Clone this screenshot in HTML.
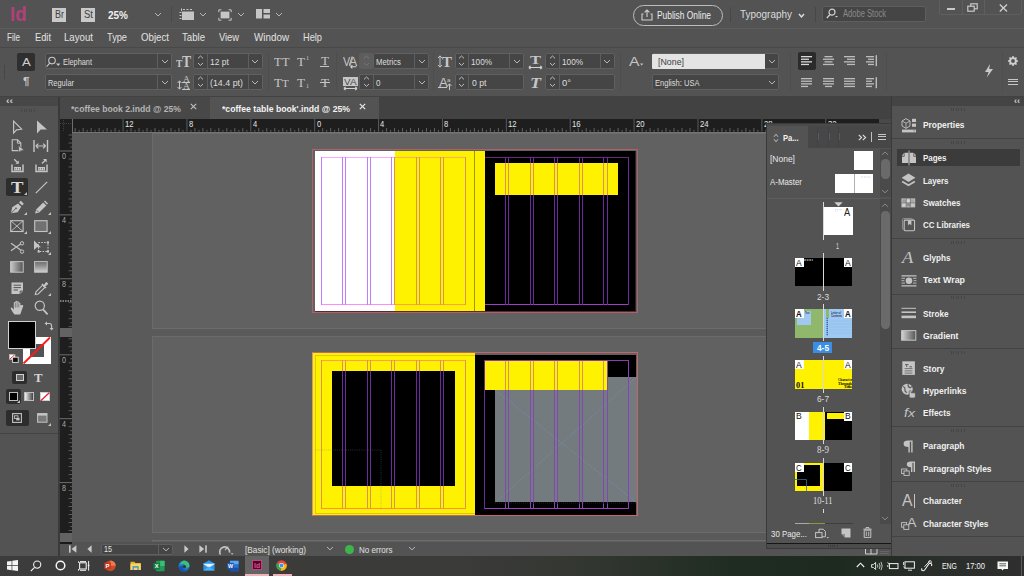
<!DOCTYPE html>
<html><head><meta charset="utf-8"><title>InDesign</title>
<style>
html,body{margin:0;padding:0;}
body{width:1024px;height:576px;overflow:hidden;background:#535353;position:relative;font-family:"Liberation Sans",sans-serif;}
#root{position:absolute;left:0;top:0;width:1024px;height:576px;overflow:hidden;background:#535353;}
#root div{position:absolute;box-sizing:border-box;}
.t{position:absolute;white-space:nowrap;transform-origin:0 50%;display:block;}
.a{position:absolute;overflow:visible;}
</style></head><body><div id="root">
<div style="left:0px;top:0px;width:1024px;height:28px;background:#535353;"></div>
<div style="left:0px;top:28px;width:1024px;height:1px;background:#5c5c5c;"></div>
<span class="t" style="left:10px;top:2px;font:normal 700 21px/23px 'Liberation Sans',sans-serif;color:#b4407a;transform:scaleX(0.8842);">Id</span>
<div style="left:52px;top:8px;width:14px;height:13.5px;background:#c9c9c9;"></div>
<span class="t" style="left:54.6px;top:8px;font:normal 400 10.5px/12px 'Liberation Sans',sans-serif;color:#404040;transform:scaleX(0.8571);">Br</span>
<div style="left:81px;top:8px;width:14px;height:13.5px;background:#c9c9c9;"></div>
<span class="t" style="left:83.6px;top:8px;font:normal 400 10.5px/12px 'Liberation Sans',sans-serif;color:#404040;transform:scaleX(0.9072);">St</span>
<span class="t" style="left:108px;top:9px;font:normal 700 11px/12px 'Liberation Sans',sans-serif;color:#f0f0f0;transform:scaleX(0.9084);">25%</span>
<svg class="a" style="left:154.0px;top:12.3px;" width="8" height="5" viewBox="0 0 8 5"><path d="M1 1 L4.0 4 L7 1" fill="none" stroke="#bdbdbd" stroke-width="0.95"/></svg>
<div style="left:171px;top:6px;width:1px;height:16px;background:#4a4a4a;"></div>
<svg class="a" style="left:179px;top:8px;" width="16" height="13" viewBox="0 0 16 13"><rect x="3" y="3.5" width="12" height="8.5" fill="#c6c6c6"/><path d="M0.5 4.5h2M0.5 7.5h2M0.5 10.5h2M4 1.5h2M7.5 1.5h2M11 1.5h2" stroke="#c6c6c6" stroke-width="1.2"/><path d="M2.5 0.5v2.5" stroke="#c6c6c6" stroke-width="1"/></svg>
<svg class="a" style="left:199.0px;top:11.8px;" width="8" height="5" viewBox="0 0 8 5"><path d="M1 1 L4.0 4 L7 1" fill="none" stroke="#bdbdbd" stroke-width="0.95"/></svg>
<svg class="a" style="left:217.5px;top:8.5px;" width="14" height="12" viewBox="0 0 14 12"><rect x="2.6" y="2.6" width="8.8" height="6.8" fill="#c6c6c6"/><path d="M0.8 3.2V0.8h2.6M10.6 0.8h2.6V3.2M13.2 8.8v2.4h-2.6M3.4 11.2H0.8V8.8" fill="none" stroke="#c6c6c6" stroke-width="1"/></svg>
<svg class="a" style="left:237.0px;top:11.8px;" width="8" height="5" viewBox="0 0 8 5"><path d="M1 1 L4.0 4 L7 1" fill="none" stroke="#bdbdbd" stroke-width="0.95"/></svg>
<svg class="a" style="left:256px;top:9px;" width="14" height="10" viewBox="0 0 14 10"><rect x="0" y="0" width="6" height="9.5" fill="#c6c6c6"/><rect x="7.5" y="0" width="6.5" height="4" fill="#c6c6c6"/><rect x="7.5" y="5.5" width="6.5" height="4" fill="#c6c6c6"/></svg>
<svg class="a" style="left:275.0px;top:11.8px;" width="8" height="5" viewBox="0 0 8 5"><path d="M1 1 L4.0 4 L7 1" fill="none" stroke="#bdbdbd" stroke-width="0.95"/></svg>
<div style="left:633px;top:5px;width:90px;height:20.5px;border:1px solid #bdbdbd;border-radius:11px;"></div>
<svg class="a" style="left:641px;top:9px;" width="12" height="12" viewBox="0 0 12 12"><path d="M2.5 5H1v6h10V5H9.5" fill="none" stroke="#d0d0d0" stroke-width="1.1"/><path d="M6 8V1.2M3.6 3.4L6 1l2.4 2.4" fill="none" stroke="#d0d0d0" stroke-width="1.1"/></svg>
<span class="t" style="left:657px;top:9px;font:normal 400 10.5px/12px 'Liberation Sans',sans-serif;color:#eeeeee;transform:scaleX(0.7975);">Publish Online</span>
<div style="left:730px;top:7px;width:1px;height:15px;background:#474747;"></div>
<span class="t" style="left:740px;top:8px;font:normal 400 10.5px/12px 'Liberation Sans',sans-serif;color:#dcdcdc;transform:scaleX(0.9477);">Typography</span>
<svg class="a" style="left:798.0px;top:13.0px;" width="7" height="5" viewBox="0 0 7 5"><path d="M1 1 L3.5 4 L6 1" fill="none" stroke="#e0e0e0" stroke-width="1.4"/></svg>
<div style="left:815px;top:7px;width:1px;height:15px;background:#474747;"></div>
<div style="left:822px;top:6px;width:104px;height:15.5px;background:#454545;border:1px solid #5e5e5e;border-radius:2px;"></div>
<svg class="a" style="left:826px;top:8px;" width="12" height="11" viewBox="0 0 12 11"><circle cx="6" cy="4.2" r="3" fill="none" stroke="#cfcfcf" stroke-width="1.2"/><path d="M4 6.5L0.8 10" stroke="#cfcfcf" stroke-width="1.3"/><path d="M9 8h3l-1.5 1.6z" fill="#cfcfcf"/></svg>
<span class="t" style="left:843px;top:8px;font:normal 400 10px/11px 'Liberation Sans',sans-serif;color:#8a8a8a;transform:scaleX(0.7583);">Adobe Stock</span>
<div style="left:939px;top:-1px;width:83px;height:15.5px;border:1px solid #5f5f5f;border-radius:0 0 3px 3px;"></div>
<div style="left:962px;top:0px;width:1px;height:14px;background:#5f5f5f;"></div>
<div style="left:984px;top:0px;width:1px;height:14px;background:#5f5f5f;"></div>
<div style="left:946.5px;top:8.3px;width:8.5px;height:2.2px;background:#c8c8c8;"></div>
<svg class="a" style="left:967px;top:3px;" width="12" height="10" viewBox="0 0 12 10"><rect x="3.8" y="0.8" width="6.4" height="5" fill="none" stroke="#c8c8c8" stroke-width="1.2"/><rect x="0.8" y="3.2" width="6.4" height="5" fill="#535353" stroke="#c8c8c8" stroke-width="1.2"/></svg>
<svg class="a" style="left:998.5px;top:3.5px;" width="9" height="8" viewBox="0 0 9 8"><path d="M0.8 0.5L8 7.5M8 0.5L0.8 7.5" stroke="#d0d0d0" stroke-width="1.3"/></svg>
<span class="t" style="left:7px;top:31px;font:normal 400 10.5px/12px 'Liberation Sans',sans-serif;color:#e2e2e2;transform:scaleX(0.7683);">File</span>
<span class="t" style="left:35px;top:31px;font:normal 400 10.5px/12px 'Liberation Sans',sans-serif;color:#e2e2e2;transform:scaleX(0.8843);">Edit</span>
<span class="t" style="left:64px;top:31px;font:normal 400 10.5px/12px 'Liberation Sans',sans-serif;color:#e2e2e2;transform:scaleX(0.9199);">Layout</span>
<span class="t" style="left:107px;top:31px;font:normal 400 10.5px/12px 'Liberation Sans',sans-serif;color:#e2e2e2;transform:scaleX(0.8786);">Type</span>
<span class="t" style="left:141px;top:31px;font:normal 400 10.5px/12px 'Liberation Sans',sans-serif;color:#e2e2e2;transform:scaleX(0.9227);">Object</span>
<span class="t" style="left:182px;top:31px;font:normal 400 10.5px/12px 'Liberation Sans',sans-serif;color:#e2e2e2;transform:scaleX(0.9162);">Table</span>
<span class="t" style="left:219px;top:31px;font:normal 400 10.5px/12px 'Liberation Sans',sans-serif;color:#e2e2e2;transform:scaleX(0.8862);">View</span>
<span class="t" style="left:254px;top:31px;font:normal 400 10.5px/12px 'Liberation Sans',sans-serif;color:#e2e2e2;transform:scaleX(0.9372);">Window</span>
<span class="t" style="left:303px;top:31px;font:normal 400 10.5px/12px 'Liberation Sans',sans-serif;color:#e2e2e2;transform:scaleX(0.8798);">Help</span>
<div style="left:0px;top:46.5px;width:1024px;height:1px;background:#484848;"></div>
<div style="left:4.3px;top:64.5px;width:1.2px;height:1.2px;background:#3e3e3e;"></div>
<div style="left:4.3px;top:66.8px;width:1.2px;height:1.2px;background:#3e3e3e;"></div>
<div style="left:4.3px;top:69.1px;width:1.2px;height:1.2px;background:#3e3e3e;"></div>
<div style="left:4.3px;top:71.4px;width:1.2px;height:1.2px;background:#3e3e3e;"></div>
<div style="left:4.3px;top:73.7px;width:1.2px;height:1.2px;background:#3e3e3e;"></div>
<div style="left:4.3px;top:76.0px;width:1.2px;height:1.2px;background:#3e3e3e;"></div>
<div style="left:4.3px;top:78.3px;width:1.2px;height:1.2px;background:#3e3e3e;"></div>
<div style="left:17px;top:53px;width:18px;height:17.5px;background:#2f2f2f;border-radius:2px;"></div>
<span class="t" style="left:22px;top:56px;font:normal 400 11.5px/12px 'Liberation Sans',sans-serif;color:#cdcdcd;transform:scaleX(1.1473);">A</span>
<span class="t" style="left:23px;top:75px;font:normal 700 11px/12px 'Liberation Sans',sans-serif;color:#c8c8c8;transform:scaleX(1.0624);">¶</span>
<div style="left:45px;top:53px;width:127px;height:16px;background:#454545;border:1px solid #606060;border-radius:2px;"></div>
<div style="left:157px;top:54px;width:1px;height:14px;background:#5e5e5e;"></div>
<svg class="a" style="left:160.5px;top:59.0px;" width="8" height="5" viewBox="0 0 8 5"><path d="M1 1 L4.0 4 L7 1" fill="none" stroke="#bdbdbd" stroke-width="0.95"/></svg>
<svg class="a" style="left:45.5px;top:55.5px;" width="15" height="12" viewBox="0 0 15 12"><circle cx="6" cy="4.6" r="3.3" fill="none" stroke="#c8c8c8" stroke-width="1.1"/><path d="M3.8 7.2L0.6 10.6" stroke="#c8c8c8" stroke-width="1.2"/><path d="M10 7.6h4.4l-2.2 2.4z" fill="#c8c8c8"/></svg>
<span class="t" style="left:63px;top:56px;font:normal 400 9.6px/11px 'Liberation Sans',sans-serif;color:#dddddd;transform:scaleX(0.7652);">Elephant</span>
<div style="left:45px;top:74px;width:127px;height:16px;background:#454545;border:1px solid #606060;border-radius:2px;"></div>
<div style="left:157px;top:75px;width:1px;height:14px;background:#5e5e5e;"></div>
<svg class="a" style="left:160.5px;top:80.0px;" width="8" height="5" viewBox="0 0 8 5"><path d="M1 1 L4.0 4 L7 1" fill="none" stroke="#bdbdbd" stroke-width="0.95"/></svg>
<span class="t" style="left:48px;top:77px;font:normal 400 9.6px/11px 'Liberation Sans',sans-serif;color:#dddddd;transform:scaleX(0.7734);">Regular</span>
<span class="t" style="left:176.4px;top:58px;font:normal 700 10px/11px 'Liberation Serif',serif;color:#c6c6c6;transform:scaleX(0.9595);">T</span>
<span class="t" style="left:182.3px;top:53px;font:normal 700 16px/17px 'Liberation Serif',serif;color:#c6c6c6;transform:scaleX(0.8527);">T</span>
<div style="left:193px;top:53px;width:69.5px;height:16px;background:#454545;border:1px solid #606060;border-radius:2px;"></div>
<div style="left:206.5px;top:54px;width:1px;height:14px;background:#5e5e5e;"></div>
<div style="left:247.5px;top:54px;width:1px;height:14px;background:#5e5e5e;"></div>
<svg class="a" style="left:196.5px;top:55.4px;" width="7" height="4.4" viewBox="0 0 7 4.4"><path d="M1 3.4 L3.5 1 L6 3.4" fill="none" stroke="#c0c0c0" stroke-width="1"/></svg>
<svg class="a" style="left:196.5px;top:62.0px;" width="7" height="4.4" viewBox="0 0 7 4.4"><path d="M1 1 L3.5 3.4 L6 1" fill="none" stroke="#c0c0c0" stroke-width="1"/></svg>
<svg class="a" style="left:251.0px;top:59.0px;" width="8" height="5" viewBox="0 0 8 5"><path d="M1 1 L4.0 4 L7 1" fill="none" stroke="#bdbdbd" stroke-width="0.95"/></svg>
<span class="t" style="left:210px;top:56px;font:normal 400 9.6px/11px 'Liberation Sans',sans-serif;color:#dddddd;transform:scaleX(0.8899);">12 pt</span>
<svg class="a" style="left:176.5px;top:79.5px;" width="5" height="10" viewBox="0 0 5 10"><path d="M2.5 1v8M0.6 3L2.5 0.8L4.4 3M0.6 7L2.5 9.2L4.4 7" fill="none" stroke="#c6c6c6" stroke-width="1"/></svg>
<span class="t" style="left:182.6px;top:74px;font:normal 400 8.5px/10px 'Liberation Serif',serif;color:#c6c6c6;transform:scaleX(1.1078);">A</span>
<span class="t" style="left:182.6px;top:81px;font:normal 400 8.5px/10px 'Liberation Serif',serif;color:#c6c6c6;transform:scaleX(1.1078);">A</span>
<div style="left:182px;top:81.8px;width:8px;height:0.9px;background:#c6c6c6;"></div>
<div style="left:182px;top:88.8px;width:8px;height:0.9px;background:#c6c6c6;"></div>
<div style="left:193px;top:74px;width:69.5px;height:16px;background:#454545;border:1px solid #606060;border-radius:2px;"></div>
<div style="left:206.5px;top:75px;width:1px;height:14px;background:#5e5e5e;"></div>
<div style="left:247.5px;top:75px;width:1px;height:14px;background:#5e5e5e;"></div>
<svg class="a" style="left:196.5px;top:76.39999999999999px;" width="7" height="4.4" viewBox="0 0 7 4.4"><path d="M1 3.4 L3.5 1 L6 3.4" fill="none" stroke="#c0c0c0" stroke-width="1"/></svg>
<svg class="a" style="left:196.5px;top:83.0px;" width="7" height="4.4" viewBox="0 0 7 4.4"><path d="M1 1 L3.5 3.4 L6 1" fill="none" stroke="#c0c0c0" stroke-width="1"/></svg>
<svg class="a" style="left:251.0px;top:80.0px;" width="8" height="5" viewBox="0 0 8 5"><path d="M1 1 L4.0 4 L7 1" fill="none" stroke="#bdbdbd" stroke-width="0.95"/></svg>
<span class="t" style="left:210px;top:77px;font:normal 400 9.6px/11px 'Liberation Sans',sans-serif;color:#dddddd;transform:scaleX(0.9230);">(14.4 pt)</span>
<div style="left:268px;top:52px;width:1px;height:39px;background:#4e4e4e;"></div>
<span class="t" style="left:274px;top:55px;font:normal 400 12.5px/14px 'Liberation Serif',serif;color:#c6c6c6;transform:scaleX(0.9823);">T</span>
<span class="t" style="left:281.7px;top:55px;font:normal 400 12.5px/14px 'Liberation Serif',serif;color:#c6c6c6;transform:scaleX(0.9823);">T</span>
<span class="t" style="left:297px;top:55px;font:normal 400 12.5px/14px 'Liberation Serif',serif;color:#c6c6c6;transform:scaleX(1.0478);">T</span>
<span class="t" style="left:305.5px;top:55px;font:normal 400 5.5px/6px 'Liberation Serif',serif;color:#c6c6c6;transform:scaleX(1.0909);">1</span>
<span class="t" style="left:320.8px;top:54px;font:normal 400 12px/14px 'Liberation Serif',serif;color:#c6c6c6;transform:scaleX(1.0913);">T</span>
<div style="left:320.3px;top:66px;width:9px;height:1.1px;background:#c6c6c6;"></div>
<span class="t" style="left:274px;top:76px;font:normal 400 12.5px/14px 'Liberation Serif',serif;color:#c6c6c6;transform:scaleX(1.0478);">T</span>
<span class="t" style="left:282px;top:78px;font:normal 400 9.8px/11px 'Liberation Serif',serif;color:#c6c6c6;transform:scaleX(1.1360);">T</span>
<span class="t" style="left:297px;top:76px;font:normal 400 12.5px/14px 'Liberation Serif',serif;color:#c6c6c6;transform:scaleX(1.0478);">T</span>
<span class="t" style="left:305.5px;top:83px;font:normal 400 5.5px/6px 'Liberation Serif',serif;color:#c6c6c6;transform:scaleX(1.0909);">1</span>
<span class="t" style="left:320.8px;top:76px;font:normal 400 12.5px/14px 'Liberation Serif',serif;color:#c6c6c6;transform:scaleX(1.0478);">T</span>
<div style="left:320px;top:82.3px;width:9.5px;height:1.1px;background:#c6c6c6;"></div>
<div style="left:336px;top:52px;width:1px;height:39px;background:#4e4e4e;"></div>
<span class="t" style="left:343.4px;top:55px;font:normal 400 12px/14px 'Liberation Sans',sans-serif;color:#c6c6c6;transform:scaleX(0.8996);">V</span>
<span class="t" style="left:348.6px;top:55px;font:normal 400 12px/14px 'Liberation Sans',sans-serif;color:#c6c6c6;transform:scaleX(1.0245);">A</span>
<svg class="a" style="left:343px;top:54px" width="15" height="15" viewBox="0 0 15 15"><path d="M9.2 2.2L6.4 10.8" stroke="#c6c6c6" stroke-width="0.9"/><path d="M7.6 12.8h5.8M7.6 12.8l1.8-1.6M7.6 12.8l1.8 1.6" stroke="#d0d0d0" stroke-width="1.1" fill="none"/></svg>
<div style="left:359px;top:53px;width:14px;height:16px;background:#5d5d5d;border-radius:2px;"></div>
<svg class="a" style="left:362.5px;top:55.4px;" width="7" height="4.4" viewBox="0 0 7 4.4"><path d="M1 3.4 L3.5 1 L6 3.4" fill="none" stroke="#777" stroke-width="1"/></svg>
<svg class="a" style="left:362.5px;top:62.0px;" width="7" height="4.4" viewBox="0 0 7 4.4"><path d="M1 1 L3.5 3.4 L6 1" fill="none" stroke="#777" stroke-width="1"/></svg>
<div style="left:373px;top:53px;width:55.5px;height:16px;background:#454545;border:1px solid #606060;border-radius:2px;"></div>
<div style="left:414px;top:54px;width:1px;height:14px;background:#5e5e5e;"></div>
<svg class="a" style="left:417.5px;top:59.0px;" width="8" height="5" viewBox="0 0 8 5"><path d="M1 1 L4.0 4 L7 1" fill="none" stroke="#bdbdbd" stroke-width="0.95"/></svg>
<span class="t" style="left:376px;top:56px;font:normal 400 9.6px/11px 'Liberation Sans',sans-serif;color:#dddddd;transform:scaleX(0.8082);">Metrics</span>
<div style="left:343px;top:76.5px;width:14.5px;height:9px;background:#c6c6c6;"></div>
<span class="t" style="left:344px;top:77px;font:normal 400 9px/10px 'Liberation Sans',sans-serif;color:#4a4a4a;transform:scaleX(1.0828);">V</span>
<span class="t" style="left:349.8px;top:77px;font:normal 400 9px/10px 'Liberation Sans',sans-serif;color:#4a4a4a;transform:scaleX(1.1161);">A</span>
<svg class="a" style="left:343px;top:86px" width="15" height="5" viewBox="0 0 15 5"><path d="M0.8 2.5h13.2M0.8 2.5l1.8-1.7M0.8 2.5l1.8 1.7M14 2.5l-1.8-1.7M14 2.5l-1.8 1.7" stroke="#d2d2d2" stroke-width="1.15" fill="none"/></svg>
<div style="left:359px;top:74px;width:69.5px;height:16px;background:#454545;border:1px solid #606060;border-radius:2px;"></div>
<div style="left:372.5px;top:75px;width:1px;height:14px;background:#5e5e5e;"></div>
<div style="left:414px;top:75px;width:1px;height:14px;background:#5e5e5e;"></div>
<svg class="a" style="left:362.5px;top:76.39999999999999px;" width="7" height="4.4" viewBox="0 0 7 4.4"><path d="M1 3.4 L3.5 1 L6 3.4" fill="none" stroke="#c0c0c0" stroke-width="1"/></svg>
<svg class="a" style="left:362.5px;top:83.0px;" width="7" height="4.4" viewBox="0 0 7 4.4"><path d="M1 1 L3.5 3.4 L6 1" fill="none" stroke="#c0c0c0" stroke-width="1"/></svg>
<svg class="a" style="left:417.5px;top:80.0px;" width="8" height="5" viewBox="0 0 8 5"><path d="M1 1 L4.0 4 L7 1" fill="none" stroke="#bdbdbd" stroke-width="0.95"/></svg>
<span class="t" style="left:376px;top:77px;font:normal 400 9.6px/11px 'Liberation Sans',sans-serif;color:#dddddd;transform:scaleX(0.8428);">0</span>
<div style="left:433px;top:52px;width:1px;height:39px;background:#4e4e4e;"></div>
<svg class="a" style="left:437px;top:55px" width="6" height="13" viewBox="0 0 6 13"><path d="M3 1v11M1 3l2-2.2L5 3M1 10l2 2.2L5 10" stroke="#c6c6c6" stroke-width="1" fill="none"/></svg>
<span class="t" style="left:442.4px;top:54px;font:normal 700 15px/16px 'Liberation Serif',serif;color:#c6c6c6;transform:scaleX(0.9995);">T</span>
<div style="left:454.5px;top:53px;width:69px;height:16px;background:#454545;border:1px solid #606060;border-radius:2px;"></div>
<div style="left:468px;top:54px;width:1px;height:14px;background:#5e5e5e;"></div>
<div style="left:509px;top:54px;width:1px;height:14px;background:#5e5e5e;"></div>
<svg class="a" style="left:458.0px;top:55.4px;" width="7" height="4.4" viewBox="0 0 7 4.4"><path d="M1 3.4 L3.5 1 L6 3.4" fill="none" stroke="#c0c0c0" stroke-width="1"/></svg>
<svg class="a" style="left:458.0px;top:62.0px;" width="7" height="4.4" viewBox="0 0 7 4.4"><path d="M1 1 L3.5 3.4 L6 1" fill="none" stroke="#c0c0c0" stroke-width="1"/></svg>
<svg class="a" style="left:512.5px;top:59.0px;" width="8" height="5" viewBox="0 0 8 5"><path d="M1 1 L4.0 4 L7 1" fill="none" stroke="#bdbdbd" stroke-width="0.95"/></svg>
<span class="t" style="left:471px;top:56px;font:normal 400 9.6px/11px 'Liberation Sans',sans-serif;color:#dddddd;transform:scaleX(0.8553);">100%</span>
<span class="t" style="left:438.6px;top:76px;font:normal 400 12px/14px 'Liberation Sans',sans-serif;color:#c6c6c6;transform:scaleX(1.0995);">A</span>
<span class="t" style="left:447.4px;top:77px;font:normal 400 6px/6px 'Liberation Sans',sans-serif;color:#c6c6c6;transform:scaleX(1.0190);">a</span>
<div style="left:438.4px;top:87.2px;width:8.6px;height:0.9px;background:#c6c6c6;"></div>
<svg class="a" style="left:445.5px;top:81.5px" width="7" height="9" viewBox="0 0 7 9"><path d="M3.5 8.2V2M1.5 4l2-2.2 2 2.2" stroke="#c6c6c6" stroke-width="1" fill="none"/></svg>
<div style="left:454.5px;top:74px;width:69px;height:16px;background:#454545;border:1px solid #606060;border-radius:2px;"></div>
<div style="left:468px;top:75px;width:1px;height:14px;background:#5e5e5e;"></div>
<svg class="a" style="left:458.0px;top:76.39999999999999px;" width="7" height="4.4" viewBox="0 0 7 4.4"><path d="M1 3.4 L3.5 1 L6 3.4" fill="none" stroke="#c0c0c0" stroke-width="1"/></svg>
<svg class="a" style="left:458.0px;top:83.0px;" width="7" height="4.4" viewBox="0 0 7 4.4"><path d="M1 1 L3.5 3.4 L6 1" fill="none" stroke="#c0c0c0" stroke-width="1"/></svg>
<span class="t" style="left:471.5px;top:77px;font:normal 400 9.6px/11px 'Liberation Sans',sans-serif;color:#dddddd;transform:scaleX(0.9055);">0 pt</span>
<span class="t" style="left:530px;top:52px;font:normal 700 13.5px/15px 'Liberation Serif',serif;color:#c6c6c6;transform:scaleX(1.2216);">T</span>
<svg class="a" style="left:528px;top:64.5px" width="15" height="5" viewBox="0 0 15 5"><path d="M0.8 2.5h13.2M0.8 2.5l1.8-1.7M0.8 2.5l1.8 1.7M14 2.5l-1.8-1.7M14 2.5l-1.8 1.7" stroke="#d2d2d2" stroke-width="1.15" fill="none"/></svg>
<div style="left:545px;top:53px;width:69.5px;height:16px;background:#454545;border:1px solid #606060;border-radius:2px;"></div>
<div style="left:558.5px;top:54px;width:1px;height:14px;background:#5e5e5e;"></div>
<div style="left:599.5px;top:54px;width:1px;height:14px;background:#5e5e5e;"></div>
<svg class="a" style="left:548.5px;top:55.4px;" width="7" height="4.4" viewBox="0 0 7 4.4"><path d="M1 3.4 L3.5 1 L6 3.4" fill="none" stroke="#c0c0c0" stroke-width="1"/></svg>
<svg class="a" style="left:548.5px;top:62.0px;" width="7" height="4.4" viewBox="0 0 7 4.4"><path d="M1 1 L3.5 3.4 L6 1" fill="none" stroke="#c0c0c0" stroke-width="1"/></svg>
<svg class="a" style="left:603.0px;top:59.0px;" width="8" height="5" viewBox="0 0 8 5"><path d="M1 1 L4.0 4 L7 1" fill="none" stroke="#bdbdbd" stroke-width="0.95"/></svg>
<span class="t" style="left:561.5px;top:56px;font:normal 400 9.6px/11px 'Liberation Sans',sans-serif;color:#dddddd;transform:scaleX(0.8553);">100%</span>
<span class="t" style="left:530px;top:75px;font:italic 700 15px/16px 'Liberation Serif',serif;color:#c6c6c6;transform:scaleX(1.2005);">T</span>
<div style="left:545px;top:74px;width:69.5px;height:16px;background:#454545;border:1px solid #606060;border-radius:2px;"></div>
<div style="left:558.5px;top:75px;width:1px;height:14px;background:#5e5e5e;"></div>
<svg class="a" style="left:548.5px;top:76.39999999999999px;" width="7" height="4.4" viewBox="0 0 7 4.4"><path d="M1 3.4 L3.5 1 L6 3.4" fill="none" stroke="#c0c0c0" stroke-width="1"/></svg>
<svg class="a" style="left:548.5px;top:83.0px;" width="7" height="4.4" viewBox="0 0 7 4.4"><path d="M1 1 L3.5 3.4 L6 1" fill="none" stroke="#c0c0c0" stroke-width="1"/></svg>
<span class="t" style="left:562px;top:77px;font:normal 400 9.6px/11px 'Liberation Sans',sans-serif;color:#dddddd;transform:scaleX(0.9806);">0°</span>
<div style="left:620px;top:52px;width:1px;height:39px;background:#4e4e4e;"></div>
<span class="t" style="left:628.5px;top:54px;font:normal 400 13px/15px 'Liberation Sans',sans-serif;color:#c6c6c6;transform:scaleX(1.2109);">A</span>
<svg class="a" style="left:639.5px;top:63px" width="4" height="3" viewBox="0 0 4 3"><path d="M0 0.5h3.4L1.7 2.6z" fill="#c6c6c6"/></svg>
<div style="left:651.5px;top:53px;width:127.5px;height:16px;background:#454545;border:1px solid #606060;border-radius:2px;"></div>
<div style="left:652px;top:53.5px;width:112.5px;height:15px;background:#e4e4e4;border-radius:1px 0 0 1px;"></div>
<svg class="a" style="left:767.5px;top:59.0px;" width="8" height="5" viewBox="0 0 8 5"><path d="M1 1 L4.0 4 L7 1" fill="none" stroke="#bdbdbd" stroke-width="0.95"/></svg>
<span class="t" style="left:657.5px;top:56px;font:normal 400 9.6px/11px 'Liberation Sans',sans-serif;color:#3c3c3c;transform:scaleX(0.9192);">[None]</span>
<div style="left:651.5px;top:74px;width:127.5px;height:16px;background:#454545;border:1px solid #606060;border-radius:2px;"></div>
<svg class="a" style="left:767.5px;top:80.0px;" width="8" height="5" viewBox="0 0 8 5"><path d="M1 1 L4.0 4 L7 1" fill="none" stroke="#bdbdbd" stroke-width="0.95"/></svg>
<span class="t" style="left:654.5px;top:77px;font:normal 400 9.6px/11px 'Liberation Sans',sans-serif;color:#dddddd;transform:scaleX(0.7868);">English: USA</span>
<div style="left:790px;top:52px;width:1px;height:39px;background:#4e4e4e;"></div>
<div style="left:798px;top:52px;width:17.5px;height:17.5px;background:#2b2b2b;border-radius:2px;"></div>
<svg class="a" style="left:801px;top:56.3px;" width="12" height="11" viewBox="0 0 12 11"><rect x="0" y="0" width="11" height="1.3" fill="#d8d8d8"/><rect x="0" y="2.6" width="8" height="1.3" fill="#d8d8d8"/><rect x="0" y="5.2" width="11" height="1.3" fill="#d8d8d8"/><rect x="0" y="7.8" width="8" height="1.3" fill="#d8d8d8"/></svg>
<svg class="a" style="left:822.5px;top:56.3px;" width="12" height="11" viewBox="0 0 12 11"><rect x="1.5" y="0" width="8" height="1.3" fill="#bdbdbd"/><rect x="0.0" y="2.6" width="11" height="1.3" fill="#bdbdbd"/><rect x="1.5" y="5.2" width="8" height="1.3" fill="#bdbdbd"/><rect x="0.0" y="7.8" width="11" height="1.3" fill="#bdbdbd"/></svg>
<svg class="a" style="left:844px;top:56.3px;" width="12" height="11" viewBox="0 0 12 11"><rect x="0" y="0" width="11" height="1.3" fill="#bdbdbd"/><rect x="3" y="2.6" width="8" height="1.3" fill="#bdbdbd"/><rect x="0" y="5.2" width="11" height="1.3" fill="#bdbdbd"/><rect x="3" y="7.8" width="8" height="1.3" fill="#bdbdbd"/></svg>
<svg class="a" style="left:866px;top:56.3px;" width="12" height="11" viewBox="0 0 12 11"><rect x="0" y="0" width="8" height="1.3" fill="#bdbdbd"/><rect x="2" y="2.6" width="6" height="1.3" fill="#bdbdbd"/><rect x="0" y="5.2" width="8" height="1.3" fill="#bdbdbd"/><rect x="2" y="7.8" width="6" height="1.3" fill="#bdbdbd"/><rect x="9.6" y="-0.8" width="1.4" height="11" fill="#bdbdbd"/></svg>
<svg class="a" style="left:801px;top:77.5px;" width="12" height="11" viewBox="0 0 12 11"><rect x="0" y="0" width="11" height="1.3" fill="#bdbdbd"/><rect x="0" y="2.6" width="11" height="1.3" fill="#bdbdbd"/><rect x="0" y="5.2" width="11" height="1.3" fill="#bdbdbd"/><rect x="0" y="7.8" width="7" height="1.3" fill="#bdbdbd"/></svg>
<svg class="a" style="left:823px;top:77.5px;" width="12" height="11" viewBox="0 0 12 11"><rect x="0.0" y="0" width="11" height="1.3" fill="#bdbdbd"/><rect x="0.0" y="2.6" width="11" height="1.3" fill="#bdbdbd"/><rect x="0.0" y="5.2" width="11" height="1.3" fill="#bdbdbd"/><rect x="2.0" y="7.8" width="7" height="1.3" fill="#bdbdbd"/></svg>
<svg class="a" style="left:844px;top:77.5px;" width="12" height="11" viewBox="0 0 12 11"><rect x="0" y="0" width="11" height="1.3" fill="#bdbdbd"/><rect x="0" y="2.6" width="11" height="1.3" fill="#bdbdbd"/><rect x="0" y="5.2" width="11" height="1.3" fill="#bdbdbd"/><rect x="0" y="7.8" width="11" height="1.3" fill="#bdbdbd"/></svg>
<svg class="a" style="left:866px;top:77.5px;" width="12" height="11" viewBox="0 0 12 11"><rect x="0" y="0" width="8" height="1.3" fill="#bdbdbd"/><rect x="0" y="2.6" width="6" height="1.3" fill="#bdbdbd"/><rect x="0" y="5.2" width="8" height="1.3" fill="#bdbdbd"/><rect x="0" y="7.8" width="6" height="1.3" fill="#bdbdbd"/><rect x="9.6" y="-0.8" width="1.4" height="11" fill="#bdbdbd"/></svg>
<div style="left:885.5px;top:52px;width:1px;height:39px;background:#4e4e4e;"></div>
<svg class="a" style="left:984px;top:64px;" width="10" height="14" viewBox="0 0 10 14"><path d="M6 0L1 8h3.6L2.8 13.5 9 5H5.2z" fill="#c8c8c8"/></svg>
<div style="left:1001.5px;top:52px;width:1px;height:39px;background:#4e4e4e;"></div>
<svg class="a" style="left:1008px;top:55.5px;" width="10" height="10" viewBox="0 0 10 10"><circle cx="5" cy="5" r="2.9" fill="none" stroke="#d0d0d0" stroke-width="1.9"/><path d="M5 0v2M5 8v2M0 5h2M8 5h2M1.5 1.5l1.4 1.4M7.1 7.1l1.4 1.4M8.5 1.5L7.1 2.9M2.9 7.1L1.5 8.5" stroke="#d0d0d0" stroke-width="1.5"/></svg>
<div style="left:1008px;top:78.5px;width:10px;height:1.2px;background:#c8c8c8;"></div>
<div style="left:1008px;top:81.2px;width:10px;height:1.2px;background:#c8c8c8;"></div>
<div style="left:1008px;top:83.9px;width:10px;height:1.2px;background:#c8c8c8;"></div>
<div style="left:0px;top:95.5px;width:1024px;height:1px;background:#434343;"></div>
<div style="left:0px;top:96px;width:1024px;height:23px;background:#424242;"></div>
<div style="left:0px;top:96.5px;width:58px;height:9.5px;background:#474747;"></div>
<span class="t" style="left:5.5px;top:96px;font:normal 700 9px/10px 'Liberation Sans',sans-serif;color:#d0d0d0;transform:scaleX(1.1679);">‹‹</span>
<div style="left:0px;top:106px;width:58px;height:450px;background:#535353;"></div>
<div style="left:58px;top:96.5px;width:1.5px;height:460px;background:#3a3a3a;"></div>
<div style="left:21.0px;top:108.5px;width:1.1px;height:3.2px;background:#454545;"></div>
<div style="left:23.6px;top:108.5px;width:1.1px;height:3.2px;background:#454545;"></div>
<div style="left:26.2px;top:108.5px;width:1.1px;height:3.2px;background:#454545;"></div>
<div style="left:28.8px;top:108.5px;width:1.1px;height:3.2px;background:#454545;"></div>
<div style="left:31.4px;top:108.5px;width:1.1px;height:3.2px;background:#454545;"></div>
<div style="left:34.0px;top:108.5px;width:1.1px;height:3.2px;background:#454545;"></div>
<div style="left:59.5px;top:96.5px;width:150px;height:22px;background:#484848;"></div>
<span class="t" style="left:71px;top:103px;font:normal 700 9.8px/11px 'Liberation Sans',sans-serif;color:#b4b4b4;transform:scaleX(0.8800);">*coffee book 2.indd @ 25%</span>
<svg class="a" style="left:189.5px;top:103px;" width="7" height="7" viewBox="0 0 7 7"><path d="M0.8 0.8L6.2 6.2M6.2 0.8L0.8 6.2" stroke="#c0c0c0" stroke-width="1.1"/></svg>
<div style="left:210px;top:96.5px;width:168.5px;height:22.5px;background:#535353;"></div>
<span class="t" style="left:222px;top:103px;font:normal 700 9.8px/11px 'Liberation Sans',sans-serif;color:#f2f2f2;transform:scaleX(0.8843);">*coffee table book'.indd @ 25%</span>
<svg class="a" style="left:358.5px;top:103px;" width="7" height="7" viewBox="0 0 7 7"><path d="M0.8 0.8L6.2 6.2M6.2 0.8L0.8 6.2" stroke="#e8e8e8" stroke-width="1.2"/></svg>
<svg class="a" style="left:12px;top:120px;" width="12" height="15" viewBox="0 0 12 15"><path d="M1.6 1.2L1.6 13L4.6 9.9L9.6 9.2Z" fill="none" stroke="#c4c4c4" stroke-width="1.15" stroke-linejoin="miter"/></svg>
<svg class="a" style="left:36px;top:120px;" width="12" height="15" viewBox="0 0 12 15"><path d="M1 0.5L1 13.5L4.7 9.5L11 9.5Z" fill="#c4c4c4"/></svg>
<svg class="a" style="left:11px;top:139px;" width="14" height="14" viewBox="0 0 14 14"><path d="M1.2 0.8H6.6L9.8 4V11.6H1.2Z" fill="none" stroke="#c4c4c4" stroke-width="1.1"/><path d="M6.4 0.8V4.2H9.8" fill="none" stroke="#c4c4c4" stroke-width="1"/><path d="M7.6 6.6V13.6L9.6 11.8L13.2 11.2Z" fill="#c4c4c4" stroke="#535353" stroke-width="0.7"/></svg>
<svg class="a" style="left:33px;top:139px;" width="16" height="14" viewBox="0 0 16 14"><path d="M1 1V13M14.5 1V13" stroke="#c4c4c4" stroke-width="1.4"/><path d="M2.8 7H12.7M2.8 7L5.4 4.6M2.8 7L5.4 9.4M12.7 7L10.1 4.6M12.7 7L10.1 9.4" fill="none" stroke="#c4c4c4" stroke-width="1.2"/></svg>
<svg class="a" style="left:10.5px;top:158px;" width="14" height="15" viewBox="0 0 14 15"><path d="M1 6.5V13.5H12V6.5" fill="none" stroke="#c4c4c4" stroke-width="1.5"/><rect x="3" y="9" width="7" height="3.5" fill="#c4c4c4"/><path d="M3.2 1.2L7 5" stroke="#c4c4c4" stroke-width="1.3"/><path d="M7.8 2.5V5.8H4.5Z" fill="#c4c4c4"/><path d="M4.3 10.2v1.2M6.5 10.2v1.2M8.5 10.2v1.2" stroke="#535353" stroke-width="0.7"/></svg>
<svg class="a" style="left:34.5px;top:158px;" width="14" height="15" viewBox="0 0 14 15"><path d="M1 6.5V13.5H12V6.5" fill="none" stroke="#c4c4c4" stroke-width="1.5"/><rect x="3" y="9" width="7" height="3.5" fill="#c4c4c4"/><path d="M7 5.5L10.8 1.7" stroke="#c4c4c4" stroke-width="1.3"/><path d="M8 1h3.6V4.6Z" fill="#c4c4c4"/><path d="M4.3 10.2v1.2M6.5 10.2v1.2M8.5 10.2v1.2" stroke="#535353" stroke-width="0.7"/></svg>
<div style="left:6px;top:178px;width:22px;height:18px;background:#2d2d2d;border-radius:2px;"></div>
<span class="t" style="left:11px;top:178px;font:normal 700 17px/19px 'Liberation Serif',serif;color:#d8d8d8;transform:scaleX(1.1024);">T</span>
<svg class="a" style="left:24px;top:192px;" width="3" height="3" viewBox="0 0 3 3"><path d="M3 0V3H0z" fill="#c4c4c4"/></svg>
<svg class="a" style="left:34.5px;top:180.5px;" width="13" height="13" viewBox="0 0 13 13"><path d="M0.8 12.2L12.2 0.8" stroke="#c4c4c4" stroke-width="1.2"/></svg>
<svg class="a" style="left:9.5px;top:199.5px;" width="15" height="15" viewBox="0 0 15 15"><path d="M1 13.2L2.2 7.2L8 3.6L11.2 6.8L7.6 12.2Z" fill="#c4c4c4"/><path d="M9 2.5L10.8 0.8L13.8 3.8L12.2 5.6Z" fill="#c4c4c4"/><path d="M1.3 13L5.6 8.6" stroke="#535353" stroke-width="0.8"/><circle cx="6" cy="8.3" r="0.9" fill="#535353"/></svg>
<svg class="a" style="left:24px;top:212px;" width="3" height="3" viewBox="0 0 3 3"><path d="M3 0V3H0z" fill="#c4c4c4"/></svg>
<svg class="a" style="left:33.5px;top:199.5px;" width="15" height="15" viewBox="0 0 15 15"><path d="M1 13.5L2.2 9.4L9.2 2.4L12.4 5.6L5.2 12.6Z" fill="#c4c4c4"/><path d="M10 1.6L11 0.6L14 3.6L13 4.6Z" fill="#c4c4c4"/><path d="M2.6 10.2L4.6 12.2" stroke="#535353" stroke-width="0.8"/></svg>
<svg class="a" style="left:48px;top:212px;" width="3" height="3" viewBox="0 0 3 3"><path d="M3 0V3H0z" fill="#c4c4c4"/></svg>
<svg class="a" style="left:9.5px;top:219.5px;" width="14" height="13" viewBox="0 0 14 13"><rect x="0.7" y="0.7" width="12.4" height="10.8" fill="none" stroke="#c4c4c4" stroke-width="1.1"/><path d="M0.7 0.7L13.1 11.5M13.1 0.7L0.7 11.5" stroke="#c4c4c4" stroke-width="0.9"/></svg>
<svg class="a" style="left:24px;top:231px;" width="3" height="3" viewBox="0 0 3 3"><path d="M3 0V3H0z" fill="#c4c4c4"/></svg>
<svg class="a" style="left:33.5px;top:219.5px;" width="14" height="13" viewBox="0 0 14 13"><rect x="0.7" y="0.7" width="12.4" height="10.8" fill="#717171" stroke="#c4c4c4" stroke-width="1.1"/></svg>
<svg class="a" style="left:48px;top:231px;" width="3" height="3" viewBox="0 0 3 3"><path d="M3 0V3H0z" fill="#c4c4c4"/></svg>
<svg class="a" style="left:9.5px;top:240.5px;" width="15" height="14" viewBox="0 0 15 14"><path d="M1 2.2L11 9.2M1 9.8L11 2.8" stroke="#c4c4c4" stroke-width="1.2"/><circle cx="12" cy="2.3" r="1.7" fill="none" stroke="#c4c4c4" stroke-width="1"/><circle cx="12" cy="10.6" r="1.7" fill="none" stroke="#c4c4c4" stroke-width="1"/></svg>
<svg class="a" style="left:33px;top:240px;" width="18" height="16" viewBox="0 0 18 16"><path d="M1 0.5V10L3.8 7.2H8Z" fill="#c4c4c4"/><rect x="5.5" y="2.5" width="9.5" height="9" fill="none" stroke="#c4c4c4" stroke-width="1" stroke-dasharray="1.6 1.2"/><rect x="13.8" y="1.4" width="2.2" height="2.2" fill="#c4c4c4"/><rect x="13.8" y="10.4" width="2.2" height="2.2" fill="#c4c4c4"/><rect x="4.6" y="10.4" width="2.2" height="2.2" fill="#c4c4c4"/></svg>
<svg class="a" style="left:48px;top:252px;" width="3" height="3" viewBox="0 0 3 3"><path d="M3 0V3H0z" fill="#c4c4c4"/></svg>
<svg class="a" style="left:9.5px;top:260.5px" width="14" height="12" viewBox="0 0 14 12"><defs><linearGradient id="g1" x1="0" x2="1"><stop offset="0" stop-color="#c8c8c8"/><stop offset="1" stop-color="#555"/></linearGradient></defs><rect x="0.6" y="0.6" width="12.6" height="10.6" fill="url(#g1)" stroke="#c4c4c4" stroke-width="1"/></svg>
<svg class="a" style="left:33.5px;top:260.5px" width="14" height="12" viewBox="0 0 14 12"><defs><linearGradient id="g2" x1="0" x2="0" y1="0" y2="1"><stop offset="0" stop-color="#666"/><stop offset="1" stop-color="#d0d0d0"/></linearGradient></defs><rect x="0.6" y="0.6" width="12.6" height="10.6" fill="url(#g2)" stroke="#c4c4c4" stroke-width="1"/><path d="M1.5 3h11M1.5 5h11" stroke="#909090" stroke-width="0.8" stroke-dasharray="1.4 1.4"/></svg>
<svg class="a" style="left:10.5px;top:282px;" width="13" height="13" viewBox="0 0 13 13"><path d="M0.5 0.5H12V9L9 12H0.5Z" fill="#c4c4c4"/><path d="M2.5 3.2H10M2.5 5.6H10M2.5 8H7" stroke="#535353" stroke-width="1"/><path d="M9 12V9H12" fill="#8a8a8a" stroke="#535353" stroke-width="0.6"/></svg>
<svg class="a" style="left:33.5px;top:280.5px;" width="15" height="15" viewBox="0 0 15 15"><path d="M1.2 13.6L2 10.8L8.6 4.2L10.8 6.4L4.2 13Z" fill="none" stroke="#c4c4c4" stroke-width="1.1"/><path d="M8 3L12 7" stroke="#c4c4c4" stroke-width="1.6"/><path d="M10 4.8L12 1.6A1.5 1.5 0 0 1 13.6 3.2L10.4 5.2Z" fill="#c4c4c4" stroke="#c4c4c4" stroke-width="1"/></svg>
<svg class="a" style="left:48px;top:293px;" width="3" height="3" viewBox="0 0 3 3"><path d="M3 0V3H0z" fill="#c4c4c4"/></svg>
<svg class="a" style="left:9.5px;top:299.5px;" width="15" height="15" viewBox="0 0 15 15"><path d="M4.5 14.5C3 12.5 1.2 10.3 0.8 8.6C0.6 7.6 1.8 7.2 2.6 8.2L3.8 9.8V3C3.8 1.8 5.4 1.8 5.4 3V1.6C5.4 0.4 7.1 0.4 7.1 1.6V2.2C7.1 1 8.8 1 8.8 2.2V3.4C8.8 2.3 10.4 2.3 10.4 3.4V5.2L12.4 5C13.6 5 13.4 6.2 13 6.8L11.6 10.6C11.2 12.4 10.6 13.4 10.2 14.5Z" fill="#c4c4c4"/><path d="M5.4 3V7.5M7.1 2.2V7.5M8.8 3.4V7.5" stroke="#535353" stroke-width="0.6"/></svg>
<svg class="a" style="left:33.5px;top:299.5px;" width="15" height="16" viewBox="0 0 15 16"><circle cx="5.8" cy="5.8" r="4.6" fill="none" stroke="#c4c4c4" stroke-width="1.2"/><path d="M9 9.4L13.6 14.4" stroke="#c4c4c4" stroke-width="1.8"/></svg>
<svg class="a" style="left:43.5px;top:321px;" width="10" height="10" viewBox="0 0 10 10"><path d="M2.2 2.5H5.5Q7.6 2.5 7.6 5V7.6" fill="none" stroke="#c4c4c4" stroke-width="1.1"/><path d="M0.6 2.5L3 0.6V4.4ZM7.6 9.4L5.6 7H9.6Z" fill="#c4c4c4"/></svg>
<div style="left:23px;top:336.5px;width:27.5px;height:27px;background:#ffffff;"></div>
<div style="left:30px;top:343.5px;width:13.5px;height:13px;background:#535353;"></div>
<svg class="a" style="left:23px;top:336.5px;" width="27.5" height="27" viewBox="0 0 27.5 27"><path d="M0.5 26.5L27 0.5" stroke="#ff1a1a" stroke-width="1.8"/></svg>
<div style="left:8px;top:321px;width:28px;height:28px;background:#000000;border:1px solid #d0d0d0;"></div>
<svg class="a" style="left:9px;top:353.5px;" width="10" height="9" viewBox="0 0 10 9"><rect x="0.5" y="0.5" width="5.5" height="5" fill="#fff" stroke="#c4c4c4" stroke-width="0.6"/><path d="M0.8 5.2L5.7 0.8" stroke="#e8202a" stroke-width="1"/><rect x="3.6" y="3.2" width="5.6" height="5.2" fill="#111" stroke="#e0e0e0" stroke-width="0.9"/></svg>
<div style="left:12px;top:371px;width:15px;height:12.5px;background:#2d2d2d;border-radius:2px;"></div>
<div style="left:15.5px;top:373.5px;width:8px;height:7.5px;background:#6a6a6a;border:1px solid #cfcfcf;"></div>
<span class="t" style="left:34px;top:371px;font:normal 700 12px/14px 'Liberation Serif',serif;color:#d6d6d6;transform:scaleX(1.0620);">T</span>
<div style="left:6px;top:389px;width:14.5px;height:14.5px;background:#2d2d2d;border-radius:2px;"></div>
<div style="left:8.5px;top:391.5px;width:9.5px;height:9.5px;background:#000;border:1px solid #bdbdbd;"></div>
<svg class="a" style="left:17px;top:400px;" width="3" height="3" viewBox="0 0 3 3"><path d="M3 0V3H0z" fill="#c4c4c4"/></svg>
<div style="left:24px;top:391.5px;width:10px;height:9.5px;background:linear-gradient(90deg,#f0f0f0,#444);border:1px solid #bdbdbd;"></div>
<div style="left:40px;top:391.5px;width:10px;height:9.5px;background:#fff;border:1px solid #d0d0d0;"></div>
<svg class="a" style="left:40px;top:391.5px;" width="10" height="9.5" viewBox="0 0 10 9.5"><path d="M0.5 9L9.5 0.5" stroke="#e8202a" stroke-width="1.3"/></svg>
<div style="left:6px;top:409.5px;width:22.5px;height:16.5px;background:#2d2d2d;border-radius:2px;"></div>
<svg class="a" style="left:12px;top:412.5px;" width="10" height="10" viewBox="0 0 10 10"><rect x="0.6" y="0.6" width="8.8" height="8.8" fill="none" stroke="#c4c4c4" stroke-width="1.1"/><rect x="2.4" y="2.8" width="3.6" height="2.6" fill="none" stroke="#c4c4c4" stroke-width="0.9"/><rect x="4.2" y="4.8" width="3.4" height="2.6" fill="#c4c4c4"/></svg>
<svg class="a" style="left:37px;top:413px;" width="11" height="10" viewBox="0 0 11 10"><rect x="0.6" y="0.6" width="9.4" height="8.6" fill="#7a7a7a" stroke="#c4c4c4" stroke-width="1"/><rect x="0.6" y="0.6" width="9.4" height="2" fill="#c4c4c4"/></svg>
<svg class="a" style="left:48px;top:422.5px;" width="3" height="3" viewBox="0 0 3 3"><path d="M3 0V3H0z" fill="#c4c4c4"/></svg>
<div style="left:0px;top:433px;width:58px;height:1px;background:#424242;"></div>
<div style="left:59.5px;top:119px;width:831px;height:422.5px;background:#5a5a5a;"></div>
<div style="left:152px;top:133px;width:738.5px;height:195.5px;background:#616161;border:1px solid #6b6b6b;border-right:none;"></div>
<div style="left:152px;top:336px;width:738.5px;height:197px;background:#616161;border:1px solid #6b6b6b;border-right:none;"></div>
<div style="left:59.5px;top:119.4px;width:819px;height:12.3px;background:#1e1e1e;"></div>
<div style="left:59.5px;top:131.7px;width:819px;height:1.3px;background:#747474;"></div>
<div style="left:59.5px;top:119px;width:12.5px;height:422.5px;background:#1e1e1e;"></div>
<div style="left:878.5px;top:119px;width:12px;height:13px;background:#5f5f5f;"></div>
<div style="left:878.5px;top:119px;width:12px;height:5px;background:#494949;"></div>
<div style="left:59.5px;top:119px;width:12.5px;height:12.7px;background:#1e1e1e;"></div>
<svg class="a" style="left:60px;top:119.5px;" width="12" height="12" viewBox="0 0 12 12"><path d="M3.5 0v11M0 3.5h11" stroke="#4a4a4a" stroke-width="0.8" stroke-dasharray="1 1"/></svg>
<div style="left:71.6px;top:119px;width:1px;height:13px;background:#6e6e6e;"></div>
<svg class="a" style="left:0px;top:0px;pointer-events:none;" width="1024" height="576" viewBox="0 0 1024 576"><rect x="74.65" y="128.10" width="1" height="3.6" fill="#666666"/><rect x="78.64" y="129.90" width="1" height="1.8" fill="#666666"/><rect x="82.63" y="128.10" width="1" height="3.6" fill="#666666"/><rect x="86.63" y="129.90" width="1" height="1.8" fill="#666666"/><rect x="90.62" y="128.10" width="1" height="3.6" fill="#666666"/><rect x="94.61" y="129.90" width="1" height="1.8" fill="#666666"/><rect x="98.60" y="128.10" width="1" height="3.6" fill="#666666"/><rect x="102.60" y="129.90" width="1" height="1.8" fill="#666666"/><rect x="106.59" y="128.10" width="1" height="3.6" fill="#666666"/><rect x="110.58" y="129.90" width="1" height="1.8" fill="#666666"/><rect x="114.57" y="128.10" width="1" height="3.6" fill="#666666"/><rect x="118.57" y="129.90" width="1" height="1.8" fill="#666666"/><rect x="126.55" y="129.90" width="1" height="1.8" fill="#666666"/><rect x="130.54" y="128.10" width="1" height="3.6" fill="#666666"/><rect x="134.54" y="129.90" width="1" height="1.8" fill="#666666"/><rect x="138.53" y="128.10" width="1" height="3.6" fill="#666666"/><rect x="142.52" y="129.90" width="1" height="1.8" fill="#666666"/><rect x="146.51" y="128.10" width="1" height="3.6" fill="#666666"/><rect x="150.51" y="129.90" width="1" height="1.8" fill="#666666"/><rect x="154.50" y="128.10" width="1" height="3.6" fill="#666666"/><rect x="158.49" y="129.90" width="1" height="1.8" fill="#666666"/><rect x="162.48" y="128.10" width="1" height="3.6" fill="#666666"/><rect x="166.48" y="129.90" width="1" height="1.8" fill="#666666"/><rect x="170.47" y="128.10" width="1" height="3.6" fill="#666666"/><rect x="174.46" y="129.90" width="1" height="1.8" fill="#666666"/><rect x="178.45" y="128.10" width="1" height="3.6" fill="#666666"/><rect x="182.45" y="129.90" width="1" height="1.8" fill="#666666"/><rect x="190.43" y="129.90" width="1" height="1.8" fill="#666666"/><rect x="194.42" y="128.10" width="1" height="3.6" fill="#666666"/><rect x="198.42" y="129.90" width="1" height="1.8" fill="#666666"/><rect x="202.41" y="128.10" width="1" height="3.6" fill="#666666"/><rect x="206.40" y="129.90" width="1" height="1.8" fill="#666666"/><rect x="210.39" y="128.10" width="1" height="3.6" fill="#666666"/><rect x="214.39" y="129.90" width="1" height="1.8" fill="#666666"/><rect x="218.38" y="128.10" width="1" height="3.6" fill="#666666"/><rect x="222.37" y="129.90" width="1" height="1.8" fill="#666666"/><rect x="226.36" y="128.10" width="1" height="3.6" fill="#666666"/><rect x="230.36" y="129.90" width="1" height="1.8" fill="#666666"/><rect x="234.35" y="128.10" width="1" height="3.6" fill="#666666"/><rect x="238.34" y="129.90" width="1" height="1.8" fill="#666666"/><rect x="242.33" y="128.10" width="1" height="3.6" fill="#666666"/><rect x="246.33" y="129.90" width="1" height="1.8" fill="#666666"/><rect x="254.31" y="129.90" width="1" height="1.8" fill="#666666"/><rect x="258.31" y="128.10" width="1" height="3.6" fill="#666666"/><rect x="262.30" y="129.90" width="1" height="1.8" fill="#666666"/><rect x="266.29" y="128.10" width="1" height="3.6" fill="#666666"/><rect x="270.28" y="129.90" width="1" height="1.8" fill="#666666"/><rect x="274.27" y="128.10" width="1" height="3.6" fill="#666666"/><rect x="278.27" y="129.90" width="1" height="1.8" fill="#666666"/><rect x="282.26" y="128.10" width="1" height="3.6" fill="#666666"/><rect x="286.25" y="129.90" width="1" height="1.8" fill="#666666"/><rect x="290.25" y="128.10" width="1" height="3.6" fill="#666666"/><rect x="294.24" y="129.90" width="1" height="1.8" fill="#666666"/><rect x="298.23" y="128.10" width="1" height="3.6" fill="#666666"/><rect x="302.22" y="129.90" width="1" height="1.8" fill="#666666"/><rect x="306.21" y="128.10" width="1" height="3.6" fill="#666666"/><rect x="310.21" y="129.90" width="1" height="1.8" fill="#666666"/><rect x="318.19" y="129.90" width="1" height="1.8" fill="#666666"/><rect x="322.19" y="128.10" width="1" height="3.6" fill="#666666"/><rect x="326.18" y="129.90" width="1" height="1.8" fill="#666666"/><rect x="330.17" y="128.10" width="1" height="3.6" fill="#666666"/><rect x="334.16" y="129.90" width="1" height="1.8" fill="#666666"/><rect x="338.15" y="128.10" width="1" height="3.6" fill="#666666"/><rect x="342.15" y="129.90" width="1" height="1.8" fill="#666666"/><rect x="346.14" y="128.10" width="1" height="3.6" fill="#666666"/><rect x="350.13" y="129.90" width="1" height="1.8" fill="#666666"/><rect x="354.12" y="128.10" width="1" height="3.6" fill="#666666"/><rect x="358.12" y="129.90" width="1" height="1.8" fill="#666666"/><rect x="362.11" y="128.10" width="1" height="3.6" fill="#666666"/><rect x="366.10" y="129.90" width="1" height="1.8" fill="#666666"/><rect x="370.09" y="128.10" width="1" height="3.6" fill="#666666"/><rect x="374.09" y="129.90" width="1" height="1.8" fill="#666666"/><rect x="382.07" y="129.90" width="1" height="1.8" fill="#666666"/><rect x="386.06" y="128.10" width="1" height="3.6" fill="#666666"/><rect x="390.06" y="129.90" width="1" height="1.8" fill="#666666"/><rect x="394.05" y="128.10" width="1" height="3.6" fill="#666666"/><rect x="398.04" y="129.90" width="1" height="1.8" fill="#666666"/><rect x="402.03" y="128.10" width="1" height="3.6" fill="#666666"/><rect x="406.03" y="129.90" width="1" height="1.8" fill="#666666"/><rect x="410.02" y="128.10" width="1" height="3.6" fill="#666666"/><rect x="414.01" y="129.90" width="1" height="1.8" fill="#666666"/><rect x="418.00" y="128.10" width="1" height="3.6" fill="#666666"/><rect x="422.00" y="129.90" width="1" height="1.8" fill="#666666"/><rect x="425.99" y="128.10" width="1" height="3.6" fill="#666666"/><rect x="429.98" y="129.90" width="1" height="1.8" fill="#666666"/><rect x="433.98" y="128.10" width="1" height="3.6" fill="#666666"/><rect x="437.97" y="129.90" width="1" height="1.8" fill="#666666"/><rect x="445.95" y="129.90" width="1" height="1.8" fill="#666666"/><rect x="449.94" y="128.10" width="1" height="3.6" fill="#666666"/><rect x="453.94" y="129.90" width="1" height="1.8" fill="#666666"/><rect x="457.93" y="128.10" width="1" height="3.6" fill="#666666"/><rect x="461.92" y="129.90" width="1" height="1.8" fill="#666666"/><rect x="465.91" y="128.10" width="1" height="3.6" fill="#666666"/><rect x="469.91" y="129.90" width="1" height="1.8" fill="#666666"/><rect x="473.90" y="128.10" width="1" height="3.6" fill="#666666"/><rect x="477.89" y="129.90" width="1" height="1.8" fill="#666666"/><rect x="481.88" y="128.10" width="1" height="3.6" fill="#666666"/><rect x="485.88" y="129.90" width="1" height="1.8" fill="#666666"/><rect x="489.87" y="128.10" width="1" height="3.6" fill="#666666"/><rect x="493.86" y="129.90" width="1" height="1.8" fill="#666666"/><rect x="497.86" y="128.10" width="1" height="3.6" fill="#666666"/><rect x="501.85" y="129.90" width="1" height="1.8" fill="#666666"/><rect x="509.83" y="129.90" width="1" height="1.8" fill="#666666"/><rect x="513.83" y="128.10" width="1" height="3.6" fill="#666666"/><rect x="517.82" y="129.90" width="1" height="1.8" fill="#666666"/><rect x="521.81" y="128.10" width="1" height="3.6" fill="#666666"/><rect x="525.80" y="129.90" width="1" height="1.8" fill="#666666"/><rect x="529.79" y="128.10" width="1" height="3.6" fill="#666666"/><rect x="533.79" y="129.90" width="1" height="1.8" fill="#666666"/><rect x="537.78" y="128.10" width="1" height="3.6" fill="#666666"/><rect x="541.77" y="129.90" width="1" height="1.8" fill="#666666"/><rect x="545.76" y="128.10" width="1" height="3.6" fill="#666666"/><rect x="549.76" y="129.90" width="1" height="1.8" fill="#666666"/><rect x="553.75" y="128.10" width="1" height="3.6" fill="#666666"/><rect x="557.74" y="129.90" width="1" height="1.8" fill="#666666"/><rect x="561.74" y="128.10" width="1" height="3.6" fill="#666666"/><rect x="565.73" y="129.90" width="1" height="1.8" fill="#666666"/><rect x="573.71" y="129.90" width="1" height="1.8" fill="#666666"/><rect x="577.70" y="128.10" width="1" height="3.6" fill="#666666"/><rect x="581.70" y="129.90" width="1" height="1.8" fill="#666666"/><rect x="585.69" y="128.10" width="1" height="3.6" fill="#666666"/><rect x="589.68" y="129.90" width="1" height="1.8" fill="#666666"/><rect x="593.67" y="128.10" width="1" height="3.6" fill="#666666"/><rect x="597.67" y="129.90" width="1" height="1.8" fill="#666666"/><rect x="601.66" y="128.10" width="1" height="3.6" fill="#666666"/><rect x="605.65" y="129.90" width="1" height="1.8" fill="#666666"/><rect x="609.64" y="128.10" width="1" height="3.6" fill="#666666"/><rect x="613.64" y="129.90" width="1" height="1.8" fill="#666666"/><rect x="617.63" y="128.10" width="1" height="3.6" fill="#666666"/><rect x="621.62" y="129.90" width="1" height="1.8" fill="#666666"/><rect x="625.62" y="128.10" width="1" height="3.6" fill="#666666"/><rect x="629.61" y="129.90" width="1" height="1.8" fill="#666666"/><rect x="637.59" y="129.90" width="1" height="1.8" fill="#666666"/><rect x="641.59" y="128.10" width="1" height="3.6" fill="#666666"/><rect x="645.58" y="129.90" width="1" height="1.8" fill="#666666"/><rect x="649.57" y="128.10" width="1" height="3.6" fill="#666666"/><rect x="653.56" y="129.90" width="1" height="1.8" fill="#666666"/><rect x="657.56" y="128.10" width="1" height="3.6" fill="#666666"/><rect x="661.55" y="129.90" width="1" height="1.8" fill="#666666"/><rect x="665.54" y="128.10" width="1" height="3.6" fill="#666666"/><rect x="669.53" y="129.90" width="1" height="1.8" fill="#666666"/><rect x="673.52" y="128.10" width="1" height="3.6" fill="#666666"/><rect x="677.52" y="129.90" width="1" height="1.8" fill="#666666"/><rect x="681.51" y="128.10" width="1" height="3.6" fill="#666666"/><rect x="685.50" y="129.90" width="1" height="1.8" fill="#666666"/><rect x="689.50" y="128.10" width="1" height="3.6" fill="#666666"/><rect x="693.49" y="129.90" width="1" height="1.8" fill="#666666"/><rect x="701.47" y="129.90" width="1" height="1.8" fill="#666666"/><rect x="705.47" y="128.10" width="1" height="3.6" fill="#666666"/><rect x="709.46" y="129.90" width="1" height="1.8" fill="#666666"/><rect x="713.45" y="128.10" width="1" height="3.6" fill="#666666"/><rect x="717.44" y="129.90" width="1" height="1.8" fill="#666666"/><rect x="721.43" y="128.10" width="1" height="3.6" fill="#666666"/><rect x="725.43" y="129.90" width="1" height="1.8" fill="#666666"/><rect x="729.42" y="128.10" width="1" height="3.6" fill="#666666"/><rect x="733.41" y="129.90" width="1" height="1.8" fill="#666666"/><rect x="737.40" y="128.10" width="1" height="3.6" fill="#666666"/><rect x="741.40" y="129.90" width="1" height="1.8" fill="#666666"/><rect x="745.39" y="128.10" width="1" height="3.6" fill="#666666"/><rect x="749.38" y="129.90" width="1" height="1.8" fill="#666666"/><rect x="753.38" y="128.10" width="1" height="3.6" fill="#666666"/><rect x="757.37" y="129.90" width="1" height="1.8" fill="#666666"/><rect x="765.35" y="129.90" width="1" height="1.8" fill="#666666"/><rect x="769.35" y="128.10" width="1" height="3.6" fill="#666666"/><rect x="773.34" y="129.90" width="1" height="1.8" fill="#666666"/><rect x="777.33" y="128.10" width="1" height="3.6" fill="#666666"/><rect x="781.32" y="129.90" width="1" height="1.8" fill="#666666"/><rect x="785.32" y="128.10" width="1" height="3.6" fill="#666666"/><rect x="789.31" y="129.90" width="1" height="1.8" fill="#666666"/><rect x="793.30" y="128.10" width="1" height="3.6" fill="#666666"/><rect x="797.29" y="129.90" width="1" height="1.8" fill="#666666"/><rect x="801.29" y="128.10" width="1" height="3.6" fill="#666666"/><rect x="805.28" y="129.90" width="1" height="1.8" fill="#666666"/><rect x="809.27" y="128.10" width="1" height="3.6" fill="#666666"/><rect x="813.26" y="129.90" width="1" height="1.8" fill="#666666"/><rect x="817.25" y="128.10" width="1" height="3.6" fill="#666666"/><rect x="821.25" y="129.90" width="1" height="1.8" fill="#666666"/><rect x="829.23" y="129.90" width="1" height="1.8" fill="#666666"/><rect x="833.22" y="128.10" width="1" height="3.6" fill="#666666"/><rect x="837.22" y="129.90" width="1" height="1.8" fill="#666666"/><rect x="841.21" y="128.10" width="1" height="3.6" fill="#666666"/><rect x="845.20" y="129.90" width="1" height="1.8" fill="#666666"/><rect x="849.19" y="128.10" width="1" height="3.6" fill="#666666"/><rect x="853.19" y="129.90" width="1" height="1.8" fill="#666666"/><rect x="857.18" y="128.10" width="1" height="3.6" fill="#666666"/><rect x="861.17" y="129.90" width="1" height="1.8" fill="#666666"/><rect x="865.16" y="128.10" width="1" height="3.6" fill="#666666"/><rect x="869.16" y="129.90" width="1" height="1.8" fill="#666666"/><rect x="873.15" y="128.10" width="1" height="3.6" fill="#666666"/><rect x="877.14" y="129.90" width="1" height="1.8" fill="#666666"/><rect x="122.56" y="119" width="1" height="12.7" fill="#5a5a5a"/><rect x="186.44" y="119" width="1" height="12.7" fill="#5a5a5a"/><rect x="250.32" y="119" width="1" height="12.7" fill="#5a5a5a"/><rect x="314.20" y="119" width="1" height="12.7" fill="#5a5a5a"/><rect x="378.08" y="119" width="1" height="12.7" fill="#5a5a5a"/><rect x="441.96" y="119" width="1" height="12.7" fill="#5a5a5a"/><rect x="505.84" y="119" width="1" height="12.7" fill="#5a5a5a"/><rect x="569.72" y="119" width="1" height="12.7" fill="#5a5a5a"/><rect x="633.60" y="119" width="1" height="12.7" fill="#5a5a5a"/><rect x="697.48" y="119" width="1" height="12.7" fill="#5a5a5a"/><rect x="761.36" y="119" width="1" height="12.7" fill="#5a5a5a"/><rect x="825.24" y="119" width="1" height="12.7" fill="#5a5a5a"/></svg>
<span class="t" style="left:124.85999999999997px;top:119px;font:normal 400 8.5px/10px 'Liberation Sans',sans-serif;color:#e6e6e6;transform:scaleX(0.9096);">12</span>
<span class="t" style="left:188.74px;top:119px;font:normal 400 8.5px/10px 'Liberation Sans',sans-serif;color:#e6e6e6;transform:scaleX(0.8884);">8</span>
<span class="t" style="left:252.62px;top:119px;font:normal 400 8.5px/10px 'Liberation Sans',sans-serif;color:#e6e6e6;transform:scaleX(0.8884);">4</span>
<span class="t" style="left:316.5px;top:119px;font:normal 400 8.5px/10px 'Liberation Sans',sans-serif;color:#e6e6e6;transform:scaleX(0.8884);">0</span>
<span class="t" style="left:380.38px;top:119px;font:normal 400 8.5px/10px 'Liberation Sans',sans-serif;color:#e6e6e6;transform:scaleX(0.8884);">4</span>
<span class="t" style="left:444.26px;top:119px;font:normal 400 8.5px/10px 'Liberation Sans',sans-serif;color:#e6e6e6;transform:scaleX(0.8884);">8</span>
<span class="t" style="left:508.14000000000004px;top:119px;font:normal 400 8.5px/10px 'Liberation Sans',sans-serif;color:#e6e6e6;transform:scaleX(0.9096);">12</span>
<span class="t" style="left:572.02px;top:119px;font:normal 400 8.5px/10px 'Liberation Sans',sans-serif;color:#e6e6e6;transform:scaleX(0.9096);">16</span>
<span class="t" style="left:635.9px;top:119px;font:normal 400 8.5px/10px 'Liberation Sans',sans-serif;color:#e6e6e6;transform:scaleX(0.9096);">20</span>
<span class="t" style="left:699.78px;top:119px;font:normal 400 8.5px/10px 'Liberation Sans',sans-serif;color:#e6e6e6;transform:scaleX(0.9096);">24</span>
<span class="t" style="left:763.66px;top:119px;font:normal 400 8.5px/10px 'Liberation Sans',sans-serif;color:#e6e6e6;transform:scaleX(0.9096);">28</span>
<span class="t" style="left:827.54px;top:119px;font:normal 400 8.5px/10px 'Liberation Sans',sans-serif;color:#e6e6e6;transform:scaleX(0.9096);">32</span>
<svg class="a" style="left:0px;top:0px;pointer-events:none;" width="1024" height="576" viewBox="0 0 1024 576"><rect x="68.60" y="134.53" width="3.4" height="1" fill="#5c5c5c"/><rect x="70.20" y="138.52" width="1.8" height="1" fill="#5c5c5c"/><rect x="68.60" y="142.51" width="3.4" height="1" fill="#5c5c5c"/><rect x="70.20" y="146.51" width="1.8" height="1" fill="#5c5c5c"/><rect x="59.5" y="150.50" width="12.5" height="1" fill="#6c6c6c"/><rect x="70.20" y="154.49" width="1.8" height="1" fill="#5c5c5c"/><rect x="68.60" y="158.49" width="3.4" height="1" fill="#5c5c5c"/><rect x="70.20" y="162.48" width="1.8" height="1" fill="#5c5c5c"/><rect x="68.60" y="166.47" width="3.4" height="1" fill="#5c5c5c"/><rect x="70.20" y="170.46" width="1.8" height="1" fill="#5c5c5c"/><rect x="68.60" y="174.46" width="3.4" height="1" fill="#5c5c5c"/><rect x="70.20" y="178.45" width="1.8" height="1" fill="#5c5c5c"/><rect x="68.60" y="182.44" width="3.4" height="1" fill="#5c5c5c"/><rect x="70.20" y="186.43" width="1.8" height="1" fill="#5c5c5c"/><rect x="68.60" y="190.43" width="3.4" height="1" fill="#5c5c5c"/><rect x="70.20" y="194.42" width="1.8" height="1" fill="#5c5c5c"/><rect x="68.60" y="198.41" width="3.4" height="1" fill="#5c5c5c"/><rect x="70.20" y="202.40" width="1.8" height="1" fill="#5c5c5c"/><rect x="68.60" y="206.40" width="3.4" height="1" fill="#5c5c5c"/><rect x="70.20" y="210.39" width="1.8" height="1" fill="#5c5c5c"/><rect x="59.5" y="214.38" width="12.5" height="1" fill="#6c6c6c"/><rect x="70.20" y="218.37" width="1.8" height="1" fill="#5c5c5c"/><rect x="68.60" y="222.37" width="3.4" height="1" fill="#5c5c5c"/><rect x="70.20" y="226.36" width="1.8" height="1" fill="#5c5c5c"/><rect x="68.60" y="230.35" width="3.4" height="1" fill="#5c5c5c"/><rect x="70.20" y="234.34" width="1.8" height="1" fill="#5c5c5c"/><rect x="68.60" y="238.34" width="3.4" height="1" fill="#5c5c5c"/><rect x="70.20" y="242.33" width="1.8" height="1" fill="#5c5c5c"/><rect x="68.60" y="246.32" width="3.4" height="1" fill="#5c5c5c"/><rect x="70.20" y="250.31" width="1.8" height="1" fill="#5c5c5c"/><rect x="68.60" y="254.31" width="3.4" height="1" fill="#5c5c5c"/><rect x="70.20" y="258.30" width="1.8" height="1" fill="#5c5c5c"/><rect x="68.60" y="262.29" width="3.4" height="1" fill="#5c5c5c"/><rect x="70.20" y="266.28" width="1.8" height="1" fill="#5c5c5c"/><rect x="68.60" y="270.27" width="3.4" height="1" fill="#5c5c5c"/><rect x="70.20" y="274.27" width="1.8" height="1" fill="#5c5c5c"/><rect x="59.5" y="278.26" width="12.5" height="1" fill="#6c6c6c"/><rect x="70.20" y="282.25" width="1.8" height="1" fill="#5c5c5c"/><rect x="68.60" y="286.25" width="3.4" height="1" fill="#5c5c5c"/><rect x="70.20" y="290.24" width="1.8" height="1" fill="#5c5c5c"/><rect x="68.60" y="294.23" width="3.4" height="1" fill="#5c5c5c"/><rect x="70.20" y="298.22" width="1.8" height="1" fill="#5c5c5c"/><rect x="68.60" y="302.22" width="3.4" height="1" fill="#5c5c5c"/><rect x="70.20" y="306.21" width="1.8" height="1" fill="#5c5c5c"/><rect x="68.60" y="310.20" width="3.4" height="1" fill="#5c5c5c"/><rect x="70.20" y="314.19" width="1.8" height="1" fill="#5c5c5c"/><rect x="68.60" y="318.19" width="3.4" height="1" fill="#5c5c5c"/><rect x="70.20" y="322.18" width="1.8" height="1" fill="#5c5c5c"/><rect x="68.60" y="326.17" width="3.4" height="1" fill="#5c5c5c"/><rect x="68.60" y="338.33" width="3.4" height="1" fill="#5c5c5c"/><rect x="70.20" y="342.32" width="1.8" height="1" fill="#5c5c5c"/><rect x="68.60" y="346.31" width="3.4" height="1" fill="#5c5c5c"/><rect x="70.20" y="350.31" width="1.8" height="1" fill="#5c5c5c"/><rect x="59.5" y="354.30" width="12.5" height="1" fill="#6c6c6c"/><rect x="70.20" y="358.29" width="1.8" height="1" fill="#5c5c5c"/><rect x="68.60" y="362.29" width="3.4" height="1" fill="#5c5c5c"/><rect x="70.20" y="366.28" width="1.8" height="1" fill="#5c5c5c"/><rect x="68.60" y="370.27" width="3.4" height="1" fill="#5c5c5c"/><rect x="70.20" y="374.26" width="1.8" height="1" fill="#5c5c5c"/><rect x="68.60" y="378.25" width="3.4" height="1" fill="#5c5c5c"/><rect x="70.20" y="382.25" width="1.8" height="1" fill="#5c5c5c"/><rect x="68.60" y="386.24" width="3.4" height="1" fill="#5c5c5c"/><rect x="70.20" y="390.23" width="1.8" height="1" fill="#5c5c5c"/><rect x="68.60" y="394.23" width="3.4" height="1" fill="#5c5c5c"/><rect x="70.20" y="398.22" width="1.8" height="1" fill="#5c5c5c"/><rect x="68.60" y="402.21" width="3.4" height="1" fill="#5c5c5c"/><rect x="70.20" y="406.20" width="1.8" height="1" fill="#5c5c5c"/><rect x="68.60" y="410.19" width="3.4" height="1" fill="#5c5c5c"/><rect x="70.20" y="414.19" width="1.8" height="1" fill="#5c5c5c"/><rect x="59.5" y="418.18" width="12.5" height="1" fill="#6c6c6c"/><rect x="70.20" y="422.17" width="1.8" height="1" fill="#5c5c5c"/><rect x="68.60" y="426.17" width="3.4" height="1" fill="#5c5c5c"/><rect x="70.20" y="430.16" width="1.8" height="1" fill="#5c5c5c"/><rect x="68.60" y="434.15" width="3.4" height="1" fill="#5c5c5c"/><rect x="70.20" y="438.14" width="1.8" height="1" fill="#5c5c5c"/><rect x="68.60" y="442.13" width="3.4" height="1" fill="#5c5c5c"/><rect x="70.20" y="446.13" width="1.8" height="1" fill="#5c5c5c"/><rect x="68.60" y="450.12" width="3.4" height="1" fill="#5c5c5c"/><rect x="70.20" y="454.11" width="1.8" height="1" fill="#5c5c5c"/><rect x="68.60" y="458.11" width="3.4" height="1" fill="#5c5c5c"/><rect x="70.20" y="462.10" width="1.8" height="1" fill="#5c5c5c"/><rect x="68.60" y="466.09" width="3.4" height="1" fill="#5c5c5c"/><rect x="70.20" y="470.08" width="1.8" height="1" fill="#5c5c5c"/><rect x="68.60" y="474.08" width="3.4" height="1" fill="#5c5c5c"/><rect x="70.20" y="478.07" width="1.8" height="1" fill="#5c5c5c"/><rect x="59.5" y="482.06" width="12.5" height="1" fill="#6c6c6c"/><rect x="70.20" y="486.05" width="1.8" height="1" fill="#5c5c5c"/><rect x="68.60" y="490.05" width="3.4" height="1" fill="#5c5c5c"/><rect x="70.20" y="494.04" width="1.8" height="1" fill="#5c5c5c"/><rect x="68.60" y="498.03" width="3.4" height="1" fill="#5c5c5c"/><rect x="70.20" y="502.02" width="1.8" height="1" fill="#5c5c5c"/><rect x="68.60" y="506.01" width="3.4" height="1" fill="#5c5c5c"/><rect x="70.20" y="510.01" width="1.8" height="1" fill="#5c5c5c"/><rect x="68.60" y="514.00" width="3.4" height="1" fill="#5c5c5c"/><rect x="70.20" y="517.99" width="1.8" height="1" fill="#5c5c5c"/><rect x="68.60" y="521.99" width="3.4" height="1" fill="#5c5c5c"/><rect x="70.20" y="525.98" width="1.8" height="1" fill="#5c5c5c"/><rect x="68.60" y="529.97" width="3.4" height="1" fill="#5c5c5c"/></svg>
<div style="left:59.5px;top:328px;width:12.5px;height:8.5px;background:#636363;"></div>
<div style="left:59.5px;top:532.5px;width:12.5px;height:9px;background:#636363;"></div>
<span class="t" style="left:62px;top:151px;font:normal 400 8.5px/10px 'Liberation Sans',sans-serif;color:#a8a8a8;transform:scaleX(0.8461);">0</span>
<span class="t" style="left:62px;top:215px;font:normal 400 8.5px/10px 'Liberation Sans',sans-serif;color:#a8a8a8;transform:scaleX(0.8461);">4</span>
<span class="t" style="left:62px;top:279px;font:normal 400 8.5px/10px 'Liberation Sans',sans-serif;color:#a8a8a8;transform:scaleX(0.8461);">8</span>
<span class="t" style="left:62px;top:355px;font:normal 400 8.5px/10px 'Liberation Sans',sans-serif;color:#a8a8a8;transform:scaleX(0.8461);">0</span>
<span class="t" style="left:62px;top:419px;font:normal 400 8.5px/10px 'Liberation Sans',sans-serif;color:#a8a8a8;transform:scaleX(0.8461);">4</span>
<span class="t" style="left:62px;top:483px;font:normal 400 8.5px/10px 'Liberation Sans',sans-serif;color:#a8a8a8;transform:scaleX(0.8461);">8</span>
<svg class="a" style="left:60px;top:299.5px;" width="12" height="2" viewBox="0 0 12 2"><path d="M0 1h12" stroke="#d8d8d8" stroke-width="1" stroke-dasharray="1.5 1"/></svg>
<div style="left:312px;top:148.5px;width:325.5px;height:164.5px;border:1px solid #b0606c;"></div>
<div style="left:315px;top:151px;width:80px;height:160px;background:#ffffff;"></div>
<div style="left:395px;top:151px;width:89.5px;height:160px;background:#fff200;"></div>
<div style="left:484.5px;top:151px;width:150.8px;height:160px;background:#000000;"></div>
<div style="left:635.3px;top:151px;width:1.1px;height:161px;background:#262626;"></div>
<div style="left:315px;top:311px;width:321px;height:1px;background:#5a2a30;"></div>
<div style="left:474.3px;top:151px;width:1px;height:160px;background:#a09800;"></div>
<div style="left:321px;top:156.88px;width:74px;height:0.85px;background:#ffa8ff;"></div>
<div style="left:321px;top:303.88px;width:74px;height:0.85px;background:#ff8cff;"></div>
<div style="left:395px;top:156.88px;width:71px;height:0.85px;background:#ffb05a;"></div>
<div style="left:395px;top:303.88px;width:71px;height:0.85px;background:#ffa050;"></div>
<div style="left:320.57px;top:157px;width:0.85px;height:147.5px;background:#c07cff;"></div>
<div style="left:342.38px;top:157px;width:0.85px;height:147.5px;background:#c07cff;"></div>
<div style="left:344.97px;top:157px;width:0.85px;height:147.5px;background:#c07cff;"></div>
<div style="left:367.18px;top:157px;width:0.85px;height:147.5px;background:#c07cff;"></div>
<div style="left:369.88px;top:157px;width:0.85px;height:147.5px;background:#c07cff;"></div>
<div style="left:391.38px;top:157px;width:0.85px;height:147.5px;background:#c07cff;"></div>
<div style="left:394.18px;top:157px;width:0.85px;height:147.5px;background:#d9935a;"></div>
<div style="left:416.18px;top:157px;width:0.85px;height:147.5px;background:#d9935a;"></div>
<div style="left:418.97px;top:157px;width:0.85px;height:147.5px;background:#d9935a;"></div>
<div style="left:440.38px;top:157px;width:0.85px;height:147.5px;background:#d9935a;"></div>
<div style="left:443.38px;top:157px;width:0.85px;height:147.5px;background:#d9935a;"></div>
<div style="left:465.38px;top:157px;width:0.85px;height:147.5px;background:#d9935a;"></div>
<div style="left:484.5px;top:156.88px;width:144.0px;height:0.85px;background:#6a2a7a;"></div>
<div style="left:484.5px;top:303.88px;width:144.0px;height:0.85px;background:#a040c0;"></div>
<div style="left:495px;top:163px;width:123px;height:32px;background:#fff200;"></div>
<div style="left:505.07px;top:157px;width:0.85px;height:147.5px;background:#6c2a9c;"></div>
<div style="left:505.07px;top:163px;width:0.85px;height:32px;background:#d9935a;"></div>
<div style="left:508.38px;top:157px;width:0.85px;height:147.5px;background:#6c2a9c;"></div>
<div style="left:508.38px;top:163px;width:0.85px;height:32px;background:#d9935a;"></div>
<div style="left:529.78px;top:157px;width:0.85px;height:147.5px;background:#6c2a9c;"></div>
<div style="left:529.78px;top:163px;width:0.85px;height:32px;background:#d9935a;"></div>
<div style="left:532.98px;top:157px;width:0.85px;height:147.5px;background:#6c2a9c;"></div>
<div style="left:532.98px;top:163px;width:0.85px;height:32px;background:#d9935a;"></div>
<div style="left:554.18px;top:157px;width:0.85px;height:147.5px;background:#6c2a9c;"></div>
<div style="left:554.18px;top:163px;width:0.85px;height:32px;background:#d9935a;"></div>
<div style="left:557.48px;top:157px;width:0.85px;height:147.5px;background:#6c2a9c;"></div>
<div style="left:557.48px;top:163px;width:0.85px;height:32px;background:#d9935a;"></div>
<div style="left:578.88px;top:157px;width:0.85px;height:147.5px;background:#6c2a9c;"></div>
<div style="left:578.88px;top:163px;width:0.85px;height:32px;background:#d9935a;"></div>
<div style="left:582.08px;top:157px;width:0.85px;height:147.5px;background:#6c2a9c;"></div>
<div style="left:582.08px;top:163px;width:0.85px;height:32px;background:#d9935a;"></div>
<div style="left:603.28px;top:157px;width:0.85px;height:147.5px;background:#6c2a9c;"></div>
<div style="left:603.28px;top:163px;width:0.85px;height:32px;background:#d9935a;"></div>
<div style="left:606.78px;top:157px;width:0.85px;height:147.5px;background:#6c2a9c;"></div>
<div style="left:606.78px;top:163px;width:0.85px;height:32px;background:#d9935a;"></div>
<div style="left:628.08px;top:157px;width:0.85px;height:147.5px;background:#6c2a9c;"></div>
<div style="left:312.5px;top:352.5px;width:162px;height:163.5px;background:#fff200;"></div>
<div style="left:474.5px;top:354.6px;width:161.5px;height:160.9px;background:#000000;"></div>
<div style="left:312px;top:352.2px;width:325.5px;height:164.3px;border:1px solid #c8646c;border-left-color:#e09080;"></div>
<div style="left:315px;top:354.8px;width:159.5px;height:159px;border:1px solid #d8cc00;border-right:none;"></div>
<div style="left:332px;top:371.3px;width:123px;height:114.7px;background:#000000;"></div>
<div style="left:321px;top:359.88px;width:145px;height:0.85px;background:#ff9c5a;"></div>
<div style="left:321px;top:507.88px;width:145px;height:0.85px;background:#ff9050;"></div>
<div style="left:320.57px;top:360px;width:0.85px;height:148.5px;background:#d9935a;"></div>
<div style="left:342.38px;top:360px;width:0.85px;height:148.5px;background:#d9935a;"></div>
<div style="left:342.38px;top:371.3px;width:0.85px;height:114.69999999999999px;background:#6c2a9c;"></div>
<div style="left:344.97px;top:360px;width:0.85px;height:148.5px;background:#d9935a;"></div>
<div style="left:344.97px;top:371.3px;width:0.85px;height:114.69999999999999px;background:#6c2a9c;"></div>
<div style="left:367.18px;top:360px;width:0.85px;height:148.5px;background:#d9935a;"></div>
<div style="left:367.18px;top:371.3px;width:0.85px;height:114.69999999999999px;background:#6c2a9c;"></div>
<div style="left:369.88px;top:360px;width:0.85px;height:148.5px;background:#d9935a;"></div>
<div style="left:369.88px;top:371.3px;width:0.85px;height:114.69999999999999px;background:#6c2a9c;"></div>
<div style="left:391.38px;top:360px;width:0.85px;height:148.5px;background:#d9935a;"></div>
<div style="left:391.38px;top:371.3px;width:0.85px;height:114.69999999999999px;background:#6c2a9c;"></div>
<div style="left:394.18px;top:360px;width:0.85px;height:148.5px;background:#d9935a;"></div>
<div style="left:394.18px;top:371.3px;width:0.85px;height:114.69999999999999px;background:#6c2a9c;"></div>
<div style="left:416.18px;top:360px;width:0.85px;height:148.5px;background:#d9935a;"></div>
<div style="left:416.18px;top:371.3px;width:0.85px;height:114.69999999999999px;background:#6c2a9c;"></div>
<div style="left:418.97px;top:360px;width:0.85px;height:148.5px;background:#d9935a;"></div>
<div style="left:418.97px;top:371.3px;width:0.85px;height:114.69999999999999px;background:#6c2a9c;"></div>
<div style="left:440.38px;top:360px;width:0.85px;height:148.5px;background:#d9935a;"></div>
<div style="left:440.38px;top:371.3px;width:0.85px;height:114.69999999999999px;background:#6c2a9c;"></div>
<div style="left:443.38px;top:360px;width:0.85px;height:148.5px;background:#d9935a;"></div>
<div style="left:443.38px;top:371.3px;width:0.85px;height:114.69999999999999px;background:#6c2a9c;"></div>
<div style="left:465.38px;top:360px;width:0.85px;height:148.5px;background:#d9935a;"></div>
<svg class="a" style="left:315px;top:448.5px;" width="68" height="61" viewBox="0 0 68 61"><path d="M0 1H66M66 1V60" fill="none" stroke="#7078a0" stroke-width="0.7" stroke-dasharray="1 1.2" opacity="0.55"/></svg>
<div style="left:495px;top:389.5px;width:141.5px;height:112.5px;background:#747b7e;"></div>
<div style="left:607px;top:376.5px;width:29.5px;height:13.5px;background:#747b7e;"></div>
<svg class="a" style="left:495px;top:376.5px;" width="142" height="126" viewBox="0 0 142 126"><path d="M0 13L141.5 125.5M141.5 0L0 125.5" stroke="#6f8fb5" stroke-width="0.85" stroke-dasharray="2 1.5" fill="none" opacity="0.85"/></svg>
<div style="left:484.5px;top:360.5px;width:122.5px;height:29px;background:#fff200;"></div>
<div style="left:484.5px;top:359.88px;width:144.0px;height:0.85px;background:#8a3cb0;"></div>
<div style="left:484.5px;top:507.88px;width:144.0px;height:0.85px;background:#a040c0;"></div>
<div style="left:484.38px;top:360px;width:0.85px;height:148.5px;background:#6c2a9c;"></div>
<div style="left:505.07px;top:360px;width:0.85px;height:148.5px;background:#8048b0;"></div>
<div style="left:505.07px;top:360.5px;width:0.85px;height:29.0px;background:#d9935a;"></div>
<div style="left:508.38px;top:360px;width:0.85px;height:148.5px;background:#8048b0;"></div>
<div style="left:508.38px;top:360.5px;width:0.85px;height:29.0px;background:#d9935a;"></div>
<div style="left:529.78px;top:360px;width:0.85px;height:148.5px;background:#8048b0;"></div>
<div style="left:529.78px;top:360.5px;width:0.85px;height:29.0px;background:#d9935a;"></div>
<div style="left:532.98px;top:360px;width:0.85px;height:148.5px;background:#8048b0;"></div>
<div style="left:532.98px;top:360.5px;width:0.85px;height:29.0px;background:#d9935a;"></div>
<div style="left:554.18px;top:360px;width:0.85px;height:148.5px;background:#8048b0;"></div>
<div style="left:554.18px;top:360.5px;width:0.85px;height:29.0px;background:#d9935a;"></div>
<div style="left:557.48px;top:360px;width:0.85px;height:148.5px;background:#8048b0;"></div>
<div style="left:557.48px;top:360.5px;width:0.85px;height:29.0px;background:#d9935a;"></div>
<div style="left:578.88px;top:360px;width:0.85px;height:148.5px;background:#8048b0;"></div>
<div style="left:578.88px;top:360.5px;width:0.85px;height:29.0px;background:#d9935a;"></div>
<div style="left:582.08px;top:360px;width:0.85px;height:148.5px;background:#8048b0;"></div>
<div style="left:582.08px;top:360.5px;width:0.85px;height:29.0px;background:#d9935a;"></div>
<div style="left:603.28px;top:360px;width:0.85px;height:148.5px;background:#8048b0;"></div>
<div style="left:603.28px;top:360.5px;width:0.85px;height:29.0px;background:#d9935a;"></div>
<div style="left:606.78px;top:360px;width:0.85px;height:148.5px;background:#8048b0;"></div>
<div style="left:628.08px;top:360px;width:0.85px;height:148.5px;background:#8a40c0;"></div>
<svg class="a" style="left:495px;top:501.5px;" width="142" height="2" viewBox="0 0 142 2"><path d="M0 1H141.5" stroke="#1a1a1a" stroke-width="1" stroke-dasharray="1 1"/></svg>
<div style="left:152px;top:540.3px;width:738.5px;height:3px;background:#616161;border:1px solid #6b6b6b;border-right:none;"></div>
<div style="left:59.5px;top:541.5px;width:831px;height:14.5px;background:#535353;"></div>
<div style="left:59.5px;top:541.5px;width:12.5px;height:2px;background:#1a1a1a;"></div>
<svg class="a" style="left:69px;top:545px;" width="8" height="8" viewBox="0 0 8 8"><rect x="0" y="0.3" width="1.6" height="7.4" fill="#c8c8c8"/><path d="M7.4 0.3V7.7L2.6 4Z" fill="#c8c8c8"/></svg>
<svg class="a" style="left:86.5px;top:545px;" width="5" height="8" viewBox="0 0 5 8"><path d="M4.6 0.3V7.7L0.4 4Z" fill="#c8c8c8"/></svg>
<div style="left:101px;top:543.5px;width:71.5px;height:11.5px;background:#454545;border:1px solid #5e5e5e;border-radius:2px;"></div>
<div style="left:158px;top:544.5px;width:1px;height:9.5px;background:#5e5e5e;"></div>
<span class="t" style="left:104px;top:544px;font:normal 400 9px/10px 'Liberation Sans',sans-serif;color:#e6e6e6;transform:scaleX(0.7991);">15</span>
<svg class="a" style="left:161.5px;top:546.6px;" width="8" height="4.8" viewBox="0 0 8 4.8"><path d="M1 1 L4.0 3.8 L7 1" fill="none" stroke="#bdbdbd" stroke-width="0.95"/></svg>
<svg class="a" style="left:184px;top:545px;" width="5" height="8" viewBox="0 0 5 8"><path d="M0.4 0.3V7.7L4.6 4Z" fill="#c8c8c8"/></svg>
<svg class="a" style="left:198.5px;top:545px;" width="8" height="8" viewBox="0 0 8 8"><path d="M0.4 0.3V7.7L5.2 4Z" fill="#c8c8c8"/><rect x="6.2" y="0.3" width="1.6" height="7.4" fill="#c8c8c8"/></svg>
<svg class="a" style="left:218.5px;top:543.5px;" width="16" height="12" viewBox="0 0 16 12"><path d="M1.4 10.6A5 5 0 1 1 10.6 8.6" fill="none" stroke="#c4c4c4" stroke-width="1.7"/><path d="M6 6L9.2 2.6" stroke="#c4c4c4" stroke-width="1.1"/><path d="M11.6 9.2h3l-1.5 1.6z" fill="#c4c4c4"/></svg>
<span class="t" style="left:245px;top:545px;font:normal 400 9.3px/10px 'Liberation Sans',sans-serif;color:#e0e0e0;transform:scaleX(0.8875);">[Basic] (working)</span>
<svg class="a" style="left:325.5px;top:546.4px;" width="8" height="4.8" viewBox="0 0 8 4.8"><path d="M1 1 L4.0 3.8 L7 1" fill="none" stroke="#bdbdbd" stroke-width="0.95"/></svg>
<div style="left:345px;top:544.5px;width:9px;height:9px;background:#3db54a;border-radius:50%;"></div>
<span class="t" style="left:358.5px;top:545px;font:normal 400 9.3px/10px 'Liberation Sans',sans-serif;color:#e0e0e0;transform:scaleX(0.8644);">No errors</span>
<svg class="a" style="left:408.0px;top:546.4px;" width="8" height="4.8" viewBox="0 0 8 4.8"><path d="M1 1 L4.0 3.8 L7 1" fill="none" stroke="#bdbdbd" stroke-width="0.95"/></svg>
<svg class="a" style="left:864.5px;top:549px;" width="13" height="6" viewBox="0 0 13 6"><path d="M0.5 0V5H6V0M6 5H12V0" fill="none" stroke="#d0d0d0" stroke-width="1"/></svg>
<div style="left:880px;top:551px;width:9px;height:1px;background:#666;"></div>
<div style="left:880px;top:553px;width:9px;height:1px;background:#666;"></div>
<div style="left:0px;top:555.7px;width:1024px;height:20.5px;background:linear-gradient(90deg,#3c3c3c 0%,#3b3b3a 45%,#323630 58%,#1f2c21 72%,#1e2a20 82%,#2a2e2b 92%,#2e2f2e 100%);"></div>
<svg class="a" style="left:6.5px;top:559.5px;" width="11" height="11" viewBox="0 0 11 11"><path d="M0 1.6L4.6 0.9V5.2H0ZM5.3 0.8L11 0V5.2H5.3ZM0 5.9H4.6V10.2L0 9.5ZM5.3 5.9H11V11L5.3 10.3Z" fill="#f4f4f4"/></svg>
<svg class="a" style="left:30px;top:559.5px;" width="12" height="12" viewBox="0 0 12 12"><circle cx="7.2" cy="4.6" r="3.6" fill="none" stroke="#f0f0f0" stroke-width="1.1"/><path d="M4.6 7.4L0.8 11.2" stroke="#f0f0f0" stroke-width="1.2"/></svg>
<svg class="a" style="left:54.5px;top:560px;" width="11" height="11" viewBox="0 0 11 11"><circle cx="5.5" cy="5.5" r="4.3" fill="none" stroke="#f4f4f4" stroke-width="1.5"/></svg>
<svg class="a" style="left:78px;top:560.5px;" width="13" height="10" viewBox="0 0 13 10"><rect x="1.6" y="1.8" width="6.6" height="6.2" fill="none" stroke="#f0f0f0" stroke-width="1.1"/><path d="M0.5 0.3V1.8M0.5 8V9.7M10.6 0V9.7" stroke="#f0f0f0" stroke-width="1"/><rect x="9.8" y="3.6" width="1.6" height="1.6" fill="#f0f0f0"/><path d="M2 0.5H8M2 9.4H8" stroke="#f0f0f0" stroke-width="0.9"/></svg>
<svg class="a" style="left:104px;top:559.5px;" width="12" height="12" viewBox="0 0 12 12"><circle cx="6.4" cy="5.8" r="5.3" fill="#d04a26"/><path d="M6.4 0.5A5.3 5.3 0 0 1 11.7 5.8H6.4Z" fill="#ee7a55"/><rect x="0.3" y="2.4" width="6.6" height="6.8" rx="0.8" fill="#c13a1c"/><text x="3.6" y="8" font-size="6" font-weight="700" font-family="Liberation Sans" fill="#fff" text-anchor="middle">P</text></svg>
<svg class="a" style="left:129.5px;top:560px;" width="12" height="11" viewBox="0 0 12 11"><path d="M0.5 1.8H4.4L5.4 3H10.8V10H0.5Z" fill="#e9b52c"/><rect x="0.5" y="3.8" width="10.3" height="6.2" fill="#f7d567"/><rect x="2.6" y="6.2" width="6" height="3.8" fill="#3c8fd8"/><rect x="3.8" y="7.6" width="3.6" height="2.4" fill="#f7d567"/></svg>
<svg class="a" style="left:153px;top:559.5px;" width="12" height="12" viewBox="0 0 12 12"><rect x="3" y="0.8" width="8.6" height="10.4" rx="0.8" fill="#1f9b55"/><rect x="7.2" y="0.8" width="4.4" height="5.2" fill="#35c07a"/><rect x="0.3" y="2.8" width="6.6" height="6.6" rx="0.8" fill="#117a41"/><text x="3.6" y="8.2" font-size="5.8" font-weight="700" font-family="Liberation Sans" fill="#fff" text-anchor="middle">X</text></svg>
<svg class="a" style="left:178px;top:559.5px;" width="12" height="12" viewBox="0 0 12 12"><circle cx="6" cy="6" r="5.5" fill="#1b77d4"/><path d="M6 0.5A5.5 5.5 0 0 1 11.5 6Q11.5 7.6 9.6 7.6H7.2Q7.6 5.2 6 4.2Q4 3.6 2 5.4Q3 0.7 6 0.5Z" fill="#3bbf7a"/><path d="M0.7 7.4Q1.4 11.5 6 11.5Q8.6 11.4 10.2 9.4Q8 10.4 6.2 9.4Q4.4 8.2 4.8 6.2Q2.4 5.4 0.7 7.4Z" fill="#1557b0"/><circle cx="6.4" cy="6.6" r="1.7" fill="#3a3a3a"/></svg>
<svg class="a" style="left:202.5px;top:560px;" width="12" height="11" viewBox="0 0 12 11"><path d="M0.4 3.6L6 0.2L11.6 3.6V10.6H0.4Z" fill="#2a94e8"/><path d="M0.4 3.8L6 7.6L11.6 3.8" fill="#e8f2fc" stroke="#e8f2fc" stroke-width="0.5"/><path d="M0.4 10.6L6 6.4L11.6 10.6Z" fill="#4cb0f6"/></svg>
<svg class="a" style="left:227px;top:559.5px;" width="12" height="12" viewBox="0 0 12 12"><rect x="3" y="0.8" width="8.6" height="10.4" rx="0.8" fill="#2b6fd0"/><rect x="3" y="0.8" width="8.6" height="3.4" fill="#58a8f4"/><rect x="3" y="7.8" width="8.6" height="3.4" fill="#1b4fa8"/><rect x="0.3" y="2.8" width="6.6" height="6.6" rx="0.8" fill="#1a57b8"/><text x="3.6" y="8.1" font-size="5.4" font-weight="700" font-family="Liberation Sans" fill="#fff" text-anchor="middle">W</text></svg>
<div style="left:245px;top:555.7px;width:24px;height:20.5px;background:#646464;"></div>
<div style="left:245px;top:574.3px;width:24px;height:1.8px;background:#f0b4b8;"></div>
<div style="left:252.3px;top:560.3px;width:10px;height:10px;background:#470a26;border:1.2px solid #c8407e;"></div>
<span class="t" style="left:254.3px;top:562px;font:normal 700 7px/7px 'Liberation Sans',sans-serif;color:#e0508e;transform:scaleX(0.9646);">Id</span>
<svg class="a" style="left:276.3px;top:560px;" width="11" height="11" viewBox="0 0 12 12"><circle cx="6" cy="6" r="5.7" fill="#e8453c"/><path d="M6 6L1.1 3.1A5.7 5.7 0 0 0 5.2 11.6Z" fill="#2da94f"/><path d="M6 6L5.2 11.6A5.7 5.7 0 0 0 11.4 4.2Z" fill="#fbbc05"/><circle cx="6" cy="6" r="2.7" fill="#fff"/><circle cx="6" cy="6" r="2.1" fill="#4a8af4"/></svg>
<div style="left:273px;top:574.3px;width:18.5px;height:1.8px;background:#f0b4b8;"></div>
<svg class="a" style="left:856px;top:562.3px;" width="9" height="6" viewBox="0 0 9 6"><path d="M0.8 5L4.5 1.2L8.2 5" fill="none" stroke="#f0f0f0" stroke-width="1.1"/></svg>
<svg class="a" style="left:870.5px;top:560.5px;" width="13" height="10" viewBox="0 0 13 10"><path d="M0.6 3.6H2.4L4.6 1.4V8.6L2.4 6.4H0.6Z" fill="none" stroke="#f0f0f0" stroke-width="0.9"/><path d="M6.4 3.4Q7.4 5 6.4 6.6M8.2 2Q10 5 8.2 8M10 0.8Q12.4 5 10 9.2" fill="none" stroke="#f0f0f0" stroke-width="0.75"/></svg>
<svg class="a" style="left:886.5px;top:561.5px;" width="12" height="8" viewBox="0 0 12 8"><rect x="2.4" y="1.6" width="8.6" height="5" fill="none" stroke="#f0f0f0" stroke-width="1"/><path d="M0.4 0.6Q2 0.8 2.2 2.6M0.8 3V5" stroke="#f0f0f0" stroke-width="0.9" fill="none"/></svg>
<svg class="a" style="left:903px;top:560.5px;" width="12" height="10" viewBox="0 0 12 10"><rect x="2" y="0.8" width="9.4" height="6.4" fill="none" stroke="#f0f0f0" stroke-width="1"/><path d="M5 9.2H9M0.6 1V4M0.6 5.5L2 7.5" stroke="#f0f0f0" stroke-width="0.9" fill="none"/></svg>
<svg class="a" style="left:921px;top:560px;" width="12" height="11" viewBox="0 0 12 11"><path d="M1 8.4Q0 10 1.6 10.6T4 9.4L7.4 4.6Q8.2 2.8 9.8 3.4T10.4 6" fill="none" stroke="#f0f0f0" stroke-width="1.1"/><path d="M3.4 6.8L8.6 1.2" stroke="#f0f0f0" stroke-width="0.9"/><circle cx="9" cy="2" r="1.4" fill="none" stroke="#f0f0f0" stroke-width="0.8"/></svg>
<span class="t" style="left:942px;top:561px;font:normal 400 8.5px/10px 'Liberation Sans',sans-serif;color:#f4f4f4;transform:scaleX(0.8144);">ENG</span>
<span class="t" style="left:966px;top:561px;font:normal 400 8.5px/10px 'Liberation Sans',sans-serif;color:#f4f4f4;transform:scaleX(0.8932);">17:00</span>
<svg class="a" style="left:997px;top:560.5px;" width="12" height="11" viewBox="0 0 12 11"><path d="M0.5 0.5H11V8H6.8L5.6 9.6L4.4 8H0.5Z" fill="#f6f6f6"/><path d="M2.4 2.8H9M2.4 4.8H9" stroke="#3a3a3a" stroke-width="0.8"/></svg>
<div style="left:1020.5px;top:556px;width:1px;height:20px;background:#5a5a5a;"></div>
<div style="left:766px;top:123px;width:125px;height:425.5px;background:#3a3a3a;"></div>
<div style="left:767px;top:124px;width:123.5px;height:2px;background:#4a4a4a;"></div>
<div style="left:767px;top:126px;width:123.5px;height:22px;background:#474747;"></div>
<div style="left:767px;top:126px;width:40.5px;height:22px;background:#535353;"></div>
<div style="left:767px;top:148px;width:123.5px;height:395px;background:#535353;"></div>
<svg class="a" style="left:773px;top:132.5px;" width="6" height="10" viewBox="0 0 6 10"><path d="M1 3.8L3 1.2L5 3.8M1 6.2L3 8.8L5 6.2" fill="none" stroke="#c8c8c8" stroke-width="0.9"/></svg>
<span class="t" style="left:782.5px;top:133px;font:normal 700 9.3px/10px 'Liberation Sans',sans-serif;color:#f4f4f4;transform:scaleX(0.8104);">Pa...</span>
<div style="left:818px;top:133px;width:1px;height:7px;background:#5a5a66;"></div>
<div style="left:828.5px;top:133px;width:1px;height:7px;background:#5a5a66;"></div>
<div style="left:838.5px;top:133px;width:1px;height:7px;background:#5a5a66;"></div>
<div style="left:817px;top:127px;width:1px;height:20px;background:#414141;"></div>
<div style="left:828px;top:127px;width:1px;height:20px;background:#414141;"></div>
<div style="left:838px;top:127px;width:1px;height:20px;background:#414141;"></div>
<svg class="a" style="left:857.5px;top:133.5px;" width="9" height="7" viewBox="0 0 9 7"><path d="M0.8 0.8L3.6 3.5L0.8 6.2M4.8 0.8L7.6 3.5L4.8 6.2" fill="none" stroke="#e0e0e0" stroke-width="1.1"/></svg>
<div style="left:871px;top:131.5px;width:1px;height:10px;background:#c0c0c0;"></div>
<div style="left:877.5px;top:133.8px;width:8.5px;height:1.2px;background:#c8c8c8;"></div>
<div style="left:877.5px;top:136.3px;width:8.5px;height:1.2px;background:#c8c8c8;"></div>
<div style="left:877.5px;top:138.8px;width:8.5px;height:1.2px;background:#c8c8c8;"></div>
<span class="t" style="left:770px;top:154px;font:normal 400 9.2px/10px 'Liberation Sans',sans-serif;color:#e8e8e8;transform:scaleX(0.9223);">[None]</span>
<div style="left:854px;top:150.5px;width:19px;height:19.5px;background:#ffffff;"></div>
<span class="t" style="left:770px;top:177px;font:normal 400 9.2px/10px 'Liberation Sans',sans-serif;color:#e8e8e8;transform:scaleX(0.8575);">A-Master</span>
<div style="left:835px;top:174px;width:38px;height:19px;background:#ffffff;"></div>
<div style="left:854.2px;top:174px;width:0.8px;height:19px;background:#b0b0b0;"></div>
<svg class="a" style="left:861px;top:176px;" width="10" height="4" viewBox="0 0 10 4"><path d="M0 1h2M3 1h2.5M6.5 1h2.5" stroke="#c8d8f0" stroke-width="0.8"/></svg>
<div style="left:879.5px;top:148.5px;width:11px;height:48.5px;background:#4a4a4a;"></div>
<svg class="a" style="left:881.0px;top:151.1px;" width="8" height="4.8" viewBox="0 0 8 4.8"><path d="M1 3.8 L4.0 1 L7 3.8" fill="none" stroke="#8a8a8a" stroke-width="1"/></svg>
<div style="left:881px;top:159px;width:8.5px;height:19.5px;background:#6a6a6a;border-radius:4.2px;"></div>
<svg class="a" style="left:881.0px;top:188.6px;" width="8" height="4.8" viewBox="0 0 8 4.8"><path d="M1 1 L4.0 3.8 L7 1" fill="none" stroke="#8a8a8a" stroke-width="1"/></svg>
<div style="left:767px;top:197.5px;width:113px;height:1px;background:#5e5e5e;"></div>
<div style="left:879.5px;top:199px;width:11px;height:325px;background:#4a4a4a;"></div>
<svg class="a" style="left:881.0px;top:203.1px;" width="8" height="4.8" viewBox="0 0 8 4.8"><path d="M1 3.8 L4.0 1 L7 3.8" fill="none" stroke="#8a8a8a" stroke-width="1"/></svg>
<div style="left:881px;top:211px;width:8.5px;height:118px;background:#6a6a6a;border-radius:4.2px;"></div>
<svg class="a" style="left:881.0px;top:515.6px;" width="8" height="4.8" viewBox="0 0 8 4.8"><path d="M1 1 L4.0 3.8 L7 1" fill="none" stroke="#8a8a8a" stroke-width="1"/></svg>
<div style="left:822.6px;top:202px;width:1.2px;height:38px;background:#d8d8d8;"></div>
<svg class="a" style="left:833.5px;top:202px;" width="9" height="5" viewBox="0 0 9 5"><path d="M0.3 0.3H8.7L4.5 4.4Z" fill="#cfcfcf"/></svg>
<div style="left:823.5px;top:206.5px;width:29px;height:28.7px;background:#ffffff;"></div>
<span class="t" style="left:843.8px;top:207px;font:normal 400 10px/11px 'Liberation Sans',sans-serif;color:#222;transform:scaleX(0.9295);">A</span>
<svg class="a" style="left:835px;top:209px;" width="8" height="3" viewBox="0 0 8 3"><path d="M0 0.6h3M4 0.6h3M0 2.2h1M2 2.2h1" stroke="#c8d8f0" stroke-width="0.7"/></svg>
<span class="t" style="left:835.5px;top:241px;font:normal 400 8.8px/10px 'Liberation Sans',sans-serif;color:#dcdcdc;transform:scaleX(0.6129);">1</span>
<div style="left:822.6px;top:253px;width:1.2px;height:38px;background:#d8d8d8;"></div>
<div style="left:794.8px;top:258px;width:57.4px;height:28.3px;background:#000000;"></div>
<div style="left:795px;top:258.3px;width:8.5px;height:9px;background:#ffffff;"></div>
<span class="t" style="left:796.2px;top:258px;font:normal 400 9px/10px 'Liberation Sans',sans-serif;color:#111;transform:scaleX(0.9495);">A</span>
<div style="left:843.6px;top:258.3px;width:8.5px;height:9px;background:#ffffff;"></div>
<span class="t" style="left:844.8000000000001px;top:258px;font:normal 400 9px/10px 'Liberation Sans',sans-serif;color:#111;transform:scaleX(0.9495);">A</span>
<svg class="a" style="left:804px;top:259px;" width="12" height="3" viewBox="0 0 12 3"><path d="M0 1h9" stroke="#e0e0e0" stroke-width="1" stroke-dasharray="2 0.6"/></svg>
<div style="left:822.6px;top:253px;width:1.2px;height:38px;background:#d8d8d8;"></div>
<span class="t" style="left:816.5px;top:292px;font:normal 400 8.8px/10px 'Liberation Sans',sans-serif;color:#dcdcdc;transform:scaleX(0.9434);">2-3</span>
<div style="left:794.8px;top:309px;width:28px;height:28.5px;background:#8fb86c;"></div>
<div style="left:823.6px;top:309px;width:28.6px;height:28.5px;background:#9ec9f2;"></div>
<div style="left:797px;top:311px;width:13.5px;height:13.5px;background:#a0c8f0;"></div>
<div style="left:825.5px;top:309px;width:3px;height:9px;background:#8fb86c;"></div>
<svg class="a" style="left:826px;top:318px;" width="3" height="18" viewBox="0 0 3 18"><path d="M1.2 0V18" stroke="#2a58a8" stroke-width="1.3" stroke-dasharray="1.2 0.8"/></svg>
<svg class="a" style="left:829px;top:320px;" width="22" height="16" viewBox="0 0 22 16"><path d="M0 1h22M0 4h22M0 7h22M0 10h22M0 13h22" stroke="#90bde8" stroke-width="0.6"/></svg>
<span class="t" style="left:831px;top:311px;font:normal 700 3.4px/4px 'Liberation Sans',sans-serif;color:#335;transform:scaleX(0.7354);">Letter of</span>
<span class="t" style="left:831px;top:314px;font:normal 700 3.4px/4px 'Liberation Sans',sans-serif;color:#335;transform:scaleX(0.7468);">Contents</span>
<span class="t" style="left:805px;top:311px;font:normal 700 3.4px/4px 'Liberation Sans',sans-serif;color:#335;transform:scaleX(0.6679);">Text</span>
<div style="left:795px;top:309.3px;width:8.5px;height:9px;background:#ffffff;"></div>
<span class="t" style="left:796.2px;top:309px;font:normal 700 9px/10px 'Liberation Sans',sans-serif;color:#111;transform:scaleX(0.8770);">A</span>
<div style="left:843.6px;top:309.3px;width:8.5px;height:9px;background:#ffffff;"></div>
<span class="t" style="left:844.8000000000001px;top:309px;font:normal 700 9px/10px 'Liberation Sans',sans-serif;color:#111;transform:scaleX(0.8770);">A</span>
<div style="left:822.6px;top:304px;width:1.2px;height:37px;background:#d8d8d8;"></div>
<div style="left:813px;top:342px;width:19px;height:11px;background:#3a8fe4;"></div>
<span class="t" style="left:816.5px;top:343px;font:normal 700 8.8px/10px 'Liberation Sans',sans-serif;color:#ffffff;transform:scaleX(0.9434);">4-5</span>
<div style="left:794.8px;top:360px;width:57.4px;height:29px;background:#fff200;"></div>
<div style="left:795px;top:360.3px;width:8.5px;height:9px;background:#ffffff;"></div>
<span class="t" style="left:796.2px;top:360px;font:normal 400 9px/10px 'Liberation Sans',sans-serif;color:#111;transform:scaleX(0.9495);">A</span>
<div style="left:843.6px;top:360.3px;width:8.5px;height:9px;background:#ffffff;"></div>
<span class="t" style="left:844.8000000000001px;top:360px;font:normal 400 9px/10px 'Liberation Sans',sans-serif;color:#111;transform:scaleX(0.9495);">A</span>
<span class="t" style="left:795.5px;top:380px;font:normal 700 8.5px/10px 'Liberation Serif',serif;color:#111;transform:scaleX(0.9765);">01</span>
<span class="t" style="left:837.5px;top:377px;font:normal 700 4.3px/5px 'Liberation Serif',serif;color:#000;transform:scaleX(0.7581);">Character</span>
<span class="t" style="left:838px;top:381px;font:normal 700 4.3px/5px 'Liberation Serif',serif;color:#000;transform:scaleX(0.8533);">Through</span>
<span class="t" style="left:843.5px;top:384px;font:normal 700 4.3px/5px 'Liberation Serif',serif;color:#000;transform:scaleX(0.8759);">Time</span>
<div style="left:822.6px;top:356px;width:1.2px;height:37px;background:#d8d8d8;"></div>
<span class="t" style="left:816.5px;top:394px;font:normal 400 8.8px/10px 'Liberation Sans',sans-serif;color:#dcdcdc;transform:scaleX(0.9434);">6-7</span>
<div style="left:794.8px;top:411.5px;width:14.2px;height:28.5px;background:#ffffff;"></div>
<div style="left:809px;top:411.5px;width:15.8px;height:28.5px;background:#fff200;"></div>
<div style="left:824.8px;top:411.5px;width:27.4px;height:28.5px;background:#000000;"></div>
<div style="left:827px;top:413px;width:18px;height:5.5px;background:#fff200;"></div>
<div style="left:795px;top:411.8px;width:8.5px;height:9px;background:#ffffff;"></div>
<span class="t" style="left:796.2px;top:411px;font:normal 400 9px/10px 'Liberation Sans',sans-serif;color:#111;transform:scaleX(0.9495);">B</span>
<div style="left:843.6px;top:411.8px;width:8.5px;height:9px;background:#ffffff;"></div>
<span class="t" style="left:844.8000000000001px;top:411px;font:normal 400 9px/10px 'Liberation Sans',sans-serif;color:#111;transform:scaleX(0.9495);">B</span>
<div style="left:822.6px;top:407px;width:1.2px;height:37px;background:#d8d8d8;"></div>
<span class="t" style="left:816.5px;top:444px;font:normal 400 9.6px/11px 'Liberation Serif',serif;color:#dcdcdc;transform:scaleX(0.9377);">8-9</span>
<div style="left:794.8px;top:463px;width:28.3px;height:28.4px;background:#fff200;"></div>
<div style="left:797px;top:465px;width:23px;height:21px;background:#000000;"></div>
<div style="left:823.6px;top:463px;width:28.6px;height:28.4px;background:#000000;"></div>
<svg class="a" style="left:795px;top:479px;" width="12" height="12" viewBox="0 0 12 12"><path d="M0 0.5H11.5V12" fill="none" stroke="#3a6898" stroke-width="0.8"/></svg>
<div style="left:795px;top:463.3px;width:8.5px;height:9px;background:#ffffff;"></div>
<span class="t" style="left:796.2px;top:463px;font:normal 400 9px/10px 'Liberation Sans',sans-serif;color:#111;transform:scaleX(0.8770);">C</span>
<div style="left:843.6px;top:463.3px;width:8.5px;height:9px;background:#ffffff;"></div>
<span class="t" style="left:844.8000000000001px;top:463px;font:normal 400 9px/10px 'Liberation Sans',sans-serif;color:#111;transform:scaleX(0.8770);">C</span>
<div style="left:822.6px;top:458px;width:1.2px;height:38px;background:#d8d8d8;"></div>
<span class="t" style="left:812.5px;top:495px;font:normal 400 9.6px/11px 'Liberation Serif',serif;color:#dcdcdc;transform:scaleX(0.8847);">10-11</span>
<div style="left:822.6px;top:509px;width:1.2px;height:4px;background:#d8d8d8;"></div>
<div style="left:795px;top:523px;width:57.5px;height:1px;background:#3e3e3e;"></div>
<div style="left:795px;top:523px;width:14px;height:1px;background:#a8a8a8;"></div>
<div style="left:809px;top:523px;width:16px;height:1px;background:#8a9a30;"></div>
<div style="left:767px;top:524px;width:123.5px;height:19px;background:#535353;"></div>
<span class="t" style="left:771px;top:529px;font:normal 400 9.2px/10px 'Liberation Sans',sans-serif;color:#e8e8e8;transform:scaleX(0.8583);">30 Page...</span>
<svg class="a" style="left:815px;top:528px;" width="14" height="11" viewBox="0 0 14 11"><rect x="0.6" y="4.6" width="6.4" height="5" fill="none" stroke="#c4c4c4" stroke-width="1"/><path d="M4 4.6V1.2H8.2L10.4 3.4V8.8H7" fill="none" stroke="#c4c4c4" stroke-width="1"/><path d="M11.6 9h2.4l-1.2 1.4z" fill="#c4c4c4"/></svg>
<svg class="a" style="left:841px;top:528.3px;" width="10" height="10" viewBox="0 0 10 10"><path d="M0.5 0.5H9.5V9.5H4L0.5 6Z" fill="#c4c4c4"/><path d="M0.5 6H4V9.5" fill="#8a8a8a"/></svg>
<svg class="a" style="left:863px;top:527.3px;" width="9" height="11" viewBox="0 0 9 11"><path d="M0.3 2.2H8.7M3 2V0.6H6V2" fill="none" stroke="#c4c4c4" stroke-width="1"/><path d="M1.2 3.2H7.8V10.4H1.2Z" fill="none" stroke="#c4c4c4" stroke-width="1"/><path d="M3.3 4.6V9M5.7 4.6V9" stroke="#c4c4c4" stroke-width="0.9"/></svg>
<div style="left:767px;top:543px;width:123.5px;height:1.2px;background:#161616;"></div>
<div style="left:767px;top:544px;width:123.5px;height:4px;background:#4c4c4c;"></div>
<div style="left:827.5px;top:544.8px;width:1.1px;height:2.4px;background:#3a3a3a;"></div>
<div style="left:829.8px;top:544.8px;width:1.1px;height:2.4px;background:#3a3a3a;"></div>
<div style="left:832.1px;top:544.8px;width:1.1px;height:2.4px;background:#3a3a3a;"></div>
<div style="left:834.4px;top:544.8px;width:1.1px;height:2.4px;background:#3a3a3a;"></div>
<div style="left:836.7px;top:544.8px;width:1.1px;height:2.4px;background:#3a3a3a;"></div>
<div style="left:890.5px;top:96px;width:1.5px;height:460px;background:#3a3a3a;"></div>
<div style="left:892px;top:96.5px;width:132px;height:9px;background:#444444;"></div>
<span class="t" style="left:1014px;top:96px;font:normal 700 9px/10px 'Liberation Sans',sans-serif;color:#d0d0d0;transform:scaleX(1.0010);">‹‹</span>
<div style="left:892px;top:105.5px;width:132px;height:450.5px;background:#535353;"></div>
<div style="left:950.5px;top:108.3px;width:1.1px;height:3.2px;background:#454545;"></div>
<div style="left:953.1px;top:108.3px;width:1.1px;height:3.2px;background:#454545;"></div>
<div style="left:955.7px;top:108.3px;width:1.1px;height:3.2px;background:#454545;"></div>
<div style="left:958.3px;top:108.3px;width:1.1px;height:3.2px;background:#454545;"></div>
<div style="left:960.9px;top:108.3px;width:1.1px;height:3.2px;background:#454545;"></div>
<div style="left:963.5px;top:108.3px;width:1.1px;height:3.2px;background:#454545;"></div>
<svg class="a" style="left:901px;top:116.5px;" width="16" height="16" viewBox="0 0 16 16"><path d="M1 4L5 1.6L9 4V9L5 11.4L1 9Z" fill="none" stroke="#c4c4c4" stroke-width="0.9"/><path d="M1 4L5 6.2L9 4M5 6.2V11.4" fill="none" stroke="#c4c4c4" stroke-width="0.8"/><rect x="11" y="1.8" width="4" height="3.2" fill="#c4c4c4"/><rect x="11" y="6.6" width="4" height="3.2" fill="#c4c4c4"/><rect x="1" y="12.6" width="14" height="2.8" fill="#c4c4c4"/><path d="M12.2 13.4h1.8l-0.9 1.2z" fill="#535353"/></svg>
<span class="t" style="left:923px;top:120px;font:normal 700 9.3px/10px 'Liberation Sans',sans-serif;color:#f0f0f0;transform:scaleX(0.9022);">Properties</span>
<div style="left:892px;top:138px;width:132px;height:1px;background:#434343;"></div>
<div style="left:950.5px;top:141.3px;width:1.1px;height:3.2px;background:#454545;"></div>
<div style="left:953.1px;top:141.3px;width:1.1px;height:3.2px;background:#454545;"></div>
<div style="left:955.7px;top:141.3px;width:1.1px;height:3.2px;background:#454545;"></div>
<div style="left:958.3px;top:141.3px;width:1.1px;height:3.2px;background:#454545;"></div>
<div style="left:960.9px;top:141.3px;width:1.1px;height:3.2px;background:#454545;"></div>
<div style="left:963.5px;top:141.3px;width:1.1px;height:3.2px;background:#454545;"></div>
<div style="left:897px;top:148.5px;width:122.5px;height:17.5px;background:#3b3b3b;"></div>
<svg class="a" style="left:901px;top:150px;" width="16" height="16" viewBox="0 0 16 16"><path d="M7.3 2.8H4.2Q1 3.6 1 7.4V13H7.3Z" fill="#c4c4c4"/><path d="M8.7 2.8H11.8Q15 3.6 15 7.4V13H8.7Z" fill="#c4c4c4"/><path d="M8 0.5V15.5" stroke="#c4c4c4" stroke-width="0.9"/><path d="M3.2 3.4V6.4H1.2M12.8 3.4V6.4H14.8" fill="none" stroke="#3b3b3b" stroke-width="0.7"/></svg>
<span class="t" style="left:923px;top:153px;font:normal 700 9.3px/10px 'Liberation Sans',sans-serif;color:#f0f0f0;transform:scaleX(0.8577);">Pages</span>
<svg class="a" style="left:901px;top:172.5px;" width="15" height="15" viewBox="0 0 15 15"><path d="M7.5 0.6L14.4 4.8L7.5 9L0.6 4.8Z" fill="#c4c4c4"/><path d="M1.2 8.4L7.5 12.2L13.8 8.4" fill="none" stroke="#c4c4c4" stroke-width="1.7"/></svg>
<span class="t" style="left:923px;top:176px;font:normal 700 9.3px/10px 'Liberation Sans',sans-serif;color:#f0f0f0;transform:scaleX(0.8504);">Layers</span>
<svg class="a" style="left:901px;top:197.5px;" width="15" height="10" viewBox="0 0 15 10"><rect x="0.4" y="0.4" width="13.8" height="9" fill="#bdbdbd"/><rect x="1.4" y="1.4" width="3.4" height="3" fill="#9a9a9a"/><rect x="5.6" y="1.4" width="3.4" height="3" fill="#d6d6d6"/><rect x="9.8" y="1.4" width="3.4" height="3" fill="#a8a8a8"/><rect x="1.4" y="5.4" width="3.4" height="3" fill="#cfcfcf"/><rect x="5.6" y="5.4" width="3.4" height="3" fill="#8e8e8e"/><rect x="9.8" y="5.4" width="3.4" height="3" fill="#c8c8c8"/><path d="M5.2 0.4V9.4M9.4 0.4V9.4M0.4 4.9H14.2" stroke="#6a6a6a" stroke-width="0.7"/></svg>
<span class="t" style="left:923px;top:198px;font:normal 700 9.3px/10px 'Liberation Sans',sans-serif;color:#f0f0f0;transform:scaleX(0.8741);">Swatches</span>
<svg class="a" style="left:901.5px;top:217.8px;" width="13.4" height="13.4" viewBox="0 0 14 14"><rect x="0.6" y="0.6" width="10.5" height="11.5" rx="1" fill="none" stroke="#9a9a9a" stroke-width="0.9"/><rect x="2.3" y="2.2" width="10.8" height="11.2" rx="1" fill="#535353" stroke="#c4c4c4" stroke-width="1.1"/><path d="M6.2 2.4V7.6L8 6.2L9.8 7.6V2.4Z" fill="#c4c4c4"/></svg>
<span class="t" style="left:923px;top:220px;font:normal 700 9.3px/10px 'Liberation Sans',sans-serif;color:#f0f0f0;transform:scaleX(0.8499);">CC Libraries</span>
<div style="left:892px;top:238px;width:132px;height:1px;background:#434343;"></div>
<div style="left:950.5px;top:241.3px;width:1.1px;height:3.2px;background:#454545;"></div>
<div style="left:953.1px;top:241.3px;width:1.1px;height:3.2px;background:#454545;"></div>
<div style="left:955.7px;top:241.3px;width:1.1px;height:3.2px;background:#454545;"></div>
<div style="left:958.3px;top:241.3px;width:1.1px;height:3.2px;background:#454545;"></div>
<div style="left:960.9px;top:241.3px;width:1.1px;height:3.2px;background:#454545;"></div>
<div style="left:963.5px;top:241.3px;width:1.1px;height:3.2px;background:#454545;"></div>
<span class="t" style="left:902.3px;top:249px;font:italic 400 16px/17px 'Liberation Serif',serif;color:#c4c4c4;transform:scaleX(1.1562);">A</span>
<span class="t" style="left:923px;top:253px;font:normal 700 9.3px/10px 'Liberation Sans',sans-serif;color:#f0f0f0;transform:scaleX(0.8724);">Glyphs</span>
<svg class="a" style="left:901px;top:275px;" width="16" height="12" viewBox="0 0 16 12"><path d="M0.5 0.9H15.5M0.5 10.9H15.5" stroke="#c4c4c4" stroke-width="1.1"/><path d="M0.5 3.3H4M0.5 5.7H3.4M0.5 8.1H4M12 3.3H15.5M12.6 5.7H15.5M12 8.1H15.5" stroke="#c4c4c4" stroke-width="0.9"/><circle cx="8" cy="5.7" r="3.3" fill="#c4c4c4"/></svg>
<span class="t" style="left:923px;top:275px;font:normal 700 9.3px/10px 'Liberation Sans',sans-serif;color:#f0f0f0;transform:scaleX(0.9524);">Text Wrap</span>
<div style="left:892px;top:293.5px;width:132px;height:1px;background:#434343;"></div>
<div style="left:950.5px;top:296.3px;width:1.1px;height:3.2px;background:#454545;"></div>
<div style="left:953.1px;top:296.3px;width:1.1px;height:3.2px;background:#454545;"></div>
<div style="left:955.7px;top:296.3px;width:1.1px;height:3.2px;background:#454545;"></div>
<div style="left:958.3px;top:296.3px;width:1.1px;height:3.2px;background:#454545;"></div>
<div style="left:960.9px;top:296.3px;width:1.1px;height:3.2px;background:#454545;"></div>
<div style="left:963.5px;top:296.3px;width:1.1px;height:3.2px;background:#454545;"></div>
<svg class="a" style="left:901px;top:306.5px;" width="16" height="12" viewBox="0 0 16 12"><rect x="0.5" y="0.8" width="14.5" height="1" fill="#c4c4c4"/><rect x="0.5" y="4.4" width="14.5" height="1.6" fill="#c4c4c4"/><rect x="0.5" y="8.6" width="14.5" height="2.6" fill="#c4c4c4"/></svg>
<span class="t" style="left:923px;top:309px;font:normal 700 9.3px/10px 'Liberation Sans',sans-serif;color:#f0f0f0;transform:scaleX(0.8810);">Stroke</span>
<svg class="a" style="left:901px;top:329.5px" width="16" height="11" viewBox="0 0 16 11"><defs><linearGradient id="g3" x1="0" x2="1"><stop offset="0" stop-color="#d4d4d4"/><stop offset="1" stop-color="#555"/></linearGradient></defs><rect x="0.6" y="0.6" width="14.2" height="9.6" fill="url(#g3)" stroke="#c4c4c4" stroke-width="1"/></svg>
<span class="t" style="left:923px;top:331px;font:normal 700 9.3px/10px 'Liberation Sans',sans-serif;color:#f0f0f0;transform:scaleX(0.9284);">Gradient</span>
<div style="left:892px;top:348px;width:132px;height:1px;background:#434343;"></div>
<div style="left:950.5px;top:351.3px;width:1.1px;height:3.2px;background:#454545;"></div>
<div style="left:953.1px;top:351.3px;width:1.1px;height:3.2px;background:#454545;"></div>
<div style="left:955.7px;top:351.3px;width:1.1px;height:3.2px;background:#454545;"></div>
<div style="left:958.3px;top:351.3px;width:1.1px;height:3.2px;background:#454545;"></div>
<div style="left:960.9px;top:351.3px;width:1.1px;height:3.2px;background:#454545;"></div>
<div style="left:963.5px;top:351.3px;width:1.1px;height:3.2px;background:#454545;"></div>
<svg class="a" style="left:902px;top:361px;" width="14" height="15" viewBox="0 0 14 15"><rect x="0.3" y="0.3" width="12.6" height="13.6" fill="#c4c4c4"/><path d="M3 3.6H6.4M4.7 3.6V6M7.4 5.8H10" stroke="#535353" stroke-width="0.9"/><path d="M2.6 7.6H10.4M2.6 9.9H10.4M2.6 12.1H10.4" stroke="#5a5a5a" stroke-width="0.75"/></svg>
<span class="t" style="left:923px;top:364px;font:normal 700 9.3px/10px 'Liberation Sans',sans-serif;color:#f0f0f0;transform:scaleX(0.9044);">Story</span>
<svg class="a" style="left:901px;top:383px;" width="16" height="16" viewBox="0 0 16 16"><circle cx="6.2" cy="6.2" r="5.5" fill="#c4c4c4"/><path d="M2.2 3.6Q4.4 4.6 4 6.6T6 9.6M7.4 1.2Q6.4 3 8.2 4.2T10.6 3.4" fill="none" stroke="#535353" stroke-width="1.1"/><path d="M8.2 8.6V13.4Q8.2 15 10 15H12.6Q14.4 15 14.4 13.4V10.8Q14.4 9.8 13.4 9.8H10.2V8.6Q10.2 7.6 9.2 7.6T8.2 8.6Z" fill="#c4c4c4" stroke="#535353" stroke-width="0.7"/></svg>
<span class="t" style="left:923px;top:386px;font:normal 700 9.3px/10px 'Liberation Sans',sans-serif;color:#f0f0f0;transform:scaleX(0.9148);">Hyperlinks</span>
<span class="t" style="left:903.5px;top:405px;font:italic 400 13px/15px 'Liberation Sans',sans-serif;color:#c4c4c4;transform:scaleX(1.1075);">f</span>
<span class="t" style="left:907.5px;top:407px;font:italic 400 11px/12px 'Liberation Sans',sans-serif;color:#c4c4c4;transform:scaleX(1.2727);">x</span>
<span class="t" style="left:923px;top:408px;font:normal 700 9.3px/10px 'Liberation Sans',sans-serif;color:#f0f0f0;transform:scaleX(0.8868);">Effects</span>
<div style="left:892px;top:426px;width:132px;height:1px;background:#434343;"></div>
<div style="left:950.5px;top:429.3px;width:1.1px;height:3.2px;background:#454545;"></div>
<div style="left:953.1px;top:429.3px;width:1.1px;height:3.2px;background:#454545;"></div>
<div style="left:955.7px;top:429.3px;width:1.1px;height:3.2px;background:#454545;"></div>
<div style="left:958.3px;top:429.3px;width:1.1px;height:3.2px;background:#454545;"></div>
<div style="left:960.9px;top:429.3px;width:1.1px;height:3.2px;background:#454545;"></div>
<div style="left:963.5px;top:429.3px;width:1.1px;height:3.2px;background:#454545;"></div>
<svg class="a" style="left:903px;top:440px;" width="11" height="13" viewBox="0 0 11 13"><path d="M5.4 0.5H9.6V12.5H8.2V1.8H6.8V12.5H5.4V7Q0.6 7 0.6 3.7T5.4 0.5Z" fill="#c4c4c4"/></svg>
<span class="t" style="left:923px;top:441px;font:normal 700 9.3px/10px 'Liberation Sans',sans-serif;color:#f0f0f0;transform:scaleX(0.9022);">Paragraph</span>
<svg class="a" style="left:901px;top:461px;" width="16" height="15" viewBox="0 0 16 15"><path d="M9.8 0.5H14V11H12.6V1.8H11.4V11H10V6.2Q5.8 6.2 5.8 3.3T9.8 0.5Z" fill="#c4c4c4"/><rect x="0.6" y="8" width="5.2" height="4.6" fill="#535353" stroke="#c4c4c4" stroke-width="0.9"/><rect x="3" y="10" width="5.2" height="4.4" fill="#535353" stroke="#c4c4c4" stroke-width="0.9"/></svg>
<span class="t" style="left:923px;top:464px;font:normal 700 9.3px/10px 'Liberation Sans',sans-serif;color:#f0f0f0;transform:scaleX(0.9015);">Paragraph Styles</span>
<div style="left:892px;top:481px;width:132px;height:1px;background:#434343;"></div>
<div style="left:950.5px;top:484.3px;width:1.1px;height:3.2px;background:#454545;"></div>
<div style="left:953.1px;top:484.3px;width:1.1px;height:3.2px;background:#454545;"></div>
<div style="left:955.7px;top:484.3px;width:1.1px;height:3.2px;background:#454545;"></div>
<div style="left:958.3px;top:484.3px;width:1.1px;height:3.2px;background:#454545;"></div>
<div style="left:960.9px;top:484.3px;width:1.1px;height:3.2px;background:#454545;"></div>
<div style="left:963.5px;top:484.3px;width:1.1px;height:3.2px;background:#454545;"></div>
<span class="t" style="left:901.5px;top:492px;font:normal 400 16px/17px 'Liberation Sans',sans-serif;color:#c4c4c4;transform:scaleX(0.9839);">A</span>
<div style="left:914px;top:493.5px;width:1px;height:14.5px;background:#c4c4c4;"></div>
<span class="t" style="left:923px;top:496px;font:normal 700 9.3px/10px 'Liberation Sans',sans-serif;color:#f0f0f0;transform:scaleX(0.8982);">Character</span>
<span class="t" style="left:907px;top:515px;font:normal 400 13px/15px 'Liberation Sans',sans-serif;color:#c4c4c4;transform:scaleX(1.0956);">A</span>
<svg class="a" style="left:901px;top:522px;" width="9" height="9" viewBox="0 0 9 9"><rect x="0.6" y="0.6" width="5" height="4.6" fill="#535353" stroke="#c4c4c4" stroke-width="0.9"/><rect x="2.8" y="2.8" width="5" height="4.6" fill="#535353" stroke="#c4c4c4" stroke-width="0.9"/></svg>
<span class="t" style="left:923px;top:519px;font:normal 700 9.3px/10px 'Liberation Sans',sans-serif;color:#f0f0f0;transform:scaleX(0.8923);">Character Styles</span>
<div style="left:892px;top:536px;width:132px;height:1px;background:#434343;"></div>
</div></body></html>
